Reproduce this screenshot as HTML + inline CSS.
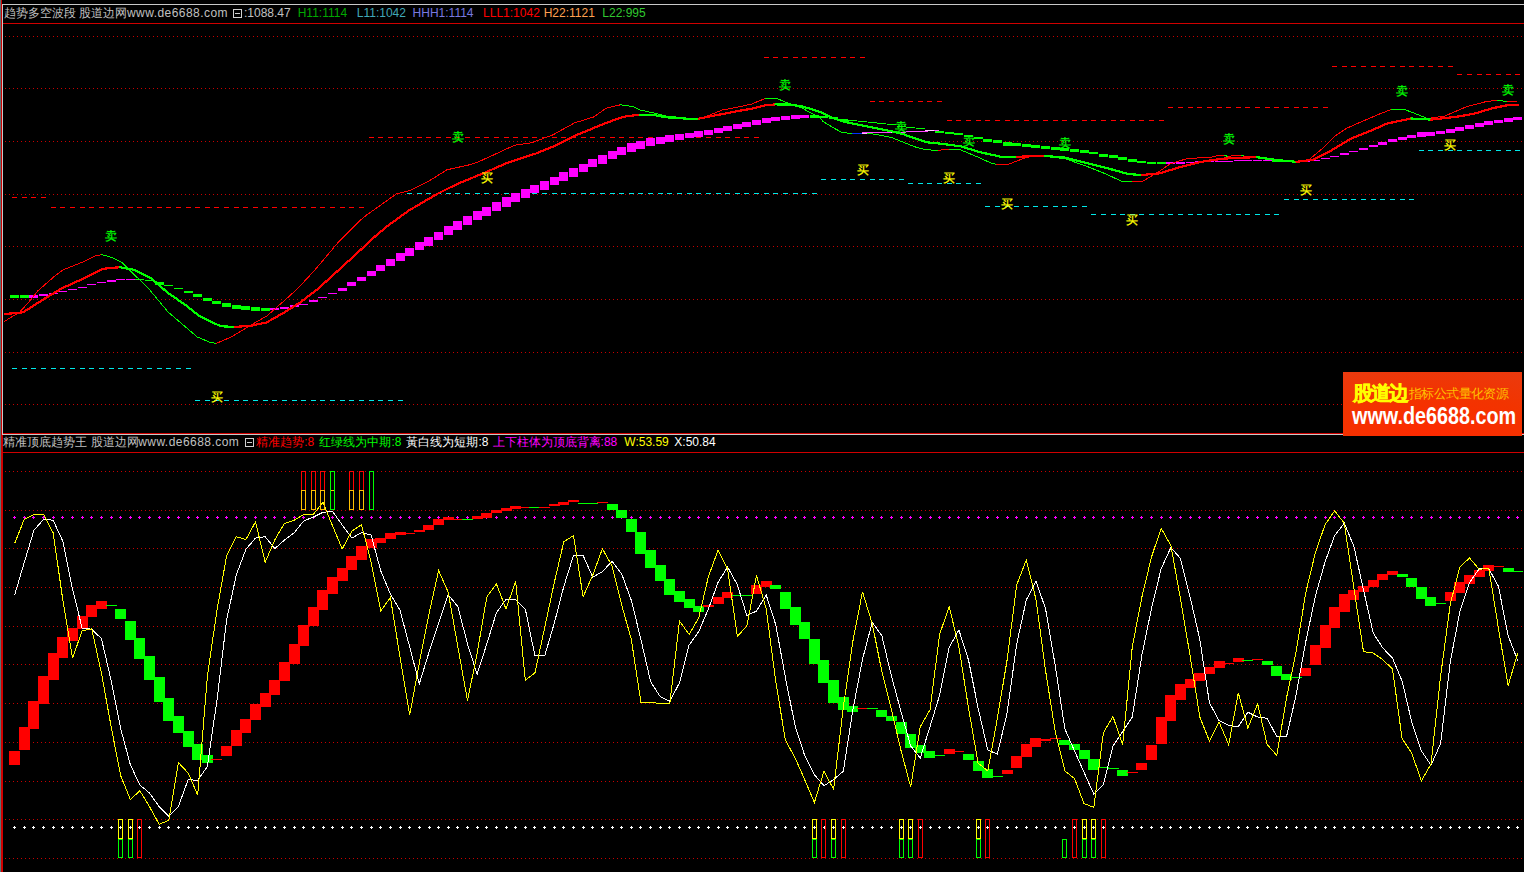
<!DOCTYPE html>
<html><head><meta charset="utf-8">
<style>
html,body{margin:0;padding:0;background:#000;width:1524px;height:872px;overflow:hidden}
#c{position:absolute;left:0;top:0}
.t{position:absolute;font-family:"Liberation Sans",sans-serif;font-size:12px;line-height:14px;white-space:nowrap}
.h{position:absolute;font-family:"Liberation Sans",sans-serif;font-size:12px;line-height:14px;white-space:nowrap}
.bx{position:absolute;width:7px;height:7px;border:1px solid #D0D0D0}
.bx::after{content:'';position:absolute;left:1px;top:3px;width:5px;height:1px;background:#D0D0D0}
.lb{position:absolute;font-family:"Liberation Sans",sans-serif;font-size:12px;line-height:14px;width:12px;height:14px;text-align:center;-webkit-text-stroke:0.25px currentColor}
#logo{position:absolute;left:1343px;top:372px;width:179px;height:64px;overflow:hidden;background:radial-gradient(ellipse 120% 140% at 50% 110%,#FF2800 0%,#F23400 55%,#E83C14 100%)}
#logo .a{position:absolute;left:10px;top:10px;font-family:"Liberation Sans",sans-serif;font-weight:bold;font-size:20px;line-height:22px;color:#FFFF00;letter-spacing:-2px;-webkit-text-stroke:0.4px #FFFF00}
#logo .b{position:absolute;left:66px;top:13.5px;font-family:"Liberation Sans",sans-serif;font-size:13.2px;line-height:16px;color:#FFC000;letter-spacing:-0.6px}
#logo .c{position:absolute;left:9px;top:32px;font-family:"Liberation Sans",sans-serif;font-weight:bold;font-size:23px;line-height:24px;color:#FFFFFF;transform-origin:0 0;transform:scaleX(0.86)}
</style></head><body>
<svg id="c" shape-rendering="crispEdges" width="1524" height="872" viewBox="0 0 1524 872">
<rect x="0" y="0" width="1" height="872" fill="#5F7373"/>
<rect x="1" y="0" width="1" height="872" fill="#D00000"/>
<rect x="2" y="4" width="1" height="430" fill="#C8C8C8"/>
<rect x="2" y="434" width="1" height="438" fill="#D00000"/>
<rect x="2" y="4" width="1522" height="1" fill="#C8C8C8"/>
<rect x="3" y="23" width="1521" height="1" fill="#D00000"/>
<rect x="3" y="433" width="1521" height="1" fill="#D00000"/>
<rect x="2" y="434" width="1522" height="1" fill="#C8C8C8"/>
<rect x="3" y="452" width="1521" height="1" fill="#D00000"/>
<line x1="5" y1="36.5" x2="1522" y2="36.5" stroke="#C80000" stroke-width="1" stroke-dasharray="1 3"/>
<line x1="5" y1="88.5" x2="1522" y2="88.5" stroke="#C80000" stroke-width="1" stroke-dasharray="1 3"/>
<line x1="5" y1="141.5" x2="1522" y2="141.5" stroke="#C80000" stroke-width="1" stroke-dasharray="1 3"/>
<line x1="5" y1="194.5" x2="1522" y2="194.5" stroke="#C80000" stroke-width="1" stroke-dasharray="1 3"/>
<line x1="5" y1="246.5" x2="1522" y2="246.5" stroke="#C80000" stroke-width="1" stroke-dasharray="1 3"/>
<line x1="5" y1="299.5" x2="1522" y2="299.5" stroke="#C80000" stroke-width="1" stroke-dasharray="1 3"/>
<line x1="5" y1="352.5" x2="1522" y2="352.5" stroke="#C80000" stroke-width="1" stroke-dasharray="1 3"/>
<line x1="5" y1="404.5" x2="1522" y2="404.5" stroke="#C80000" stroke-width="1" stroke-dasharray="1 3"/>
<line x1="5" y1="471.5" x2="1522" y2="471.5" stroke="#C80000" stroke-width="1" stroke-dasharray="1 3"/>
<line x1="5" y1="510.5" x2="1522" y2="510.5" stroke="#C80000" stroke-width="1" stroke-dasharray="1 3"/>
<line x1="5" y1="548.5" x2="1522" y2="548.5" stroke="#C80000" stroke-width="1" stroke-dasharray="1 3"/>
<line x1="5" y1="587.5" x2="1522" y2="587.5" stroke="#C80000" stroke-width="1" stroke-dasharray="1 3"/>
<line x1="5" y1="626.5" x2="1522" y2="626.5" stroke="#C80000" stroke-width="1" stroke-dasharray="1 3"/>
<line x1="5" y1="664.5" x2="1522" y2="664.5" stroke="#C80000" stroke-width="1" stroke-dasharray="1 3"/>
<line x1="5" y1="703.5" x2="1522" y2="703.5" stroke="#C80000" stroke-width="1" stroke-dasharray="1 3"/>
<line x1="5" y1="742.5" x2="1522" y2="742.5" stroke="#C80000" stroke-width="1" stroke-dasharray="1 3"/>
<line x1="5" y1="781.5" x2="1522" y2="781.5" stroke="#C80000" stroke-width="1" stroke-dasharray="1 3"/>
<line x1="5" y1="819.5" x2="1522" y2="819.5" stroke="#C80000" stroke-width="1" stroke-dasharray="1 3"/>
<line x1="5" y1="858.5" x2="1522" y2="858.5" stroke="#C80000" stroke-width="1" stroke-dasharray="1 3"/>
<rect x="12" y="197" width="5" height="1" fill="#FF0000"/>
<rect x="22" y="197" width="5" height="1" fill="#FF0000"/>
<rect x="31" y="197" width="5" height="1" fill="#FF0000"/>
<rect x="41" y="197" width="5" height="1" fill="#FF0000"/>
<rect x="51" y="207" width="5" height="1" fill="#FF0000"/>
<rect x="60" y="207" width="5" height="1" fill="#FF0000"/>
<rect x="70" y="207" width="5" height="1" fill="#FF0000"/>
<rect x="80" y="207" width="5" height="1" fill="#FF0000"/>
<rect x="89" y="207" width="5" height="1" fill="#FF0000"/>
<rect x="99" y="207" width="5" height="1" fill="#FF0000"/>
<rect x="109" y="207" width="5" height="1" fill="#FF0000"/>
<rect x="118" y="207" width="5" height="1" fill="#FF0000"/>
<rect x="128" y="207" width="5" height="1" fill="#FF0000"/>
<rect x="137" y="207" width="5" height="1" fill="#FF0000"/>
<rect x="147" y="207" width="5" height="1" fill="#FF0000"/>
<rect x="157" y="207" width="5" height="1" fill="#FF0000"/>
<rect x="166" y="207" width="5" height="1" fill="#FF0000"/>
<rect x="176" y="207" width="5" height="1" fill="#FF0000"/>
<rect x="186" y="207" width="5" height="1" fill="#FF0000"/>
<rect x="195" y="207" width="5" height="1" fill="#FF0000"/>
<rect x="205" y="207" width="5" height="1" fill="#FF0000"/>
<rect x="214" y="207" width="5" height="1" fill="#FF0000"/>
<rect x="224" y="207" width="5" height="1" fill="#FF0000"/>
<rect x="234" y="207" width="5" height="1" fill="#FF0000"/>
<rect x="243" y="207" width="5" height="1" fill="#FF0000"/>
<rect x="253" y="207" width="5" height="1" fill="#FF0000"/>
<rect x="263" y="207" width="5" height="1" fill="#FF0000"/>
<rect x="272" y="207" width="5" height="1" fill="#FF0000"/>
<rect x="282" y="207" width="5" height="1" fill="#FF0000"/>
<rect x="292" y="207" width="5" height="1" fill="#FF0000"/>
<rect x="301" y="207" width="5" height="1" fill="#FF0000"/>
<rect x="311" y="207" width="5" height="1" fill="#FF0000"/>
<rect x="320" y="207" width="5" height="1" fill="#FF0000"/>
<rect x="330" y="207" width="5" height="1" fill="#FF0000"/>
<rect x="340" y="207" width="5" height="1" fill="#FF0000"/>
<rect x="349" y="207" width="5" height="1" fill="#FF0000"/>
<rect x="359" y="207" width="5" height="1" fill="#FF0000"/>
<rect x="369" y="137" width="5" height="1" fill="#FF0000"/>
<rect x="378" y="137" width="5" height="1" fill="#FF0000"/>
<rect x="388" y="137" width="5" height="1" fill="#FF0000"/>
<rect x="398" y="137" width="5" height="1" fill="#FF0000"/>
<rect x="407" y="137" width="5" height="1" fill="#FF0000"/>
<rect x="417" y="137" width="5" height="1" fill="#FF0000"/>
<rect x="426" y="137" width="5" height="1" fill="#FF0000"/>
<rect x="436" y="137" width="5" height="1" fill="#FF0000"/>
<rect x="446" y="137" width="5" height="1" fill="#FF0000"/>
<rect x="455" y="137" width="5" height="1" fill="#FF0000"/>
<rect x="465" y="137" width="5" height="1" fill="#FF0000"/>
<rect x="475" y="137" width="5" height="1" fill="#FF0000"/>
<rect x="484" y="137" width="5" height="1" fill="#FF0000"/>
<rect x="494" y="137" width="5" height="1" fill="#FF0000"/>
<rect x="504" y="137" width="5" height="1" fill="#FF0000"/>
<rect x="513" y="137" width="5" height="1" fill="#FF0000"/>
<rect x="523" y="137" width="5" height="1" fill="#FF0000"/>
<rect x="532" y="137" width="5" height="1" fill="#FF0000"/>
<rect x="542" y="137" width="5" height="1" fill="#FF0000"/>
<rect x="552" y="137" width="5" height="1" fill="#FF0000"/>
<rect x="561" y="137" width="5" height="1" fill="#FF0000"/>
<rect x="571" y="137" width="5" height="1" fill="#FF0000"/>
<rect x="581" y="137" width="5" height="1" fill="#FF0000"/>
<rect x="590" y="137" width="5" height="1" fill="#FF0000"/>
<rect x="600" y="137" width="5" height="1" fill="#FF0000"/>
<rect x="610" y="137" width="5" height="1" fill="#FF0000"/>
<rect x="619" y="137" width="5" height="1" fill="#FF0000"/>
<rect x="629" y="137" width="5" height="1" fill="#FF0000"/>
<rect x="638" y="137" width="5" height="1" fill="#FF0000"/>
<rect x="648" y="137" width="5" height="1" fill="#FF0000"/>
<rect x="658" y="137" width="5" height="1" fill="#FF0000"/>
<rect x="667" y="137" width="5" height="1" fill="#FF0000"/>
<rect x="677" y="137" width="5" height="1" fill="#FF0000"/>
<rect x="687" y="137" width="5" height="1" fill="#FF0000"/>
<rect x="696" y="137" width="5" height="1" fill="#FF0000"/>
<rect x="706" y="137" width="5" height="1" fill="#FF0000"/>
<rect x="716" y="137" width="5" height="1" fill="#FF0000"/>
<rect x="725" y="137" width="5" height="1" fill="#FF0000"/>
<rect x="735" y="137" width="5" height="1" fill="#FF0000"/>
<rect x="744" y="137" width="5" height="1" fill="#FF0000"/>
<rect x="754" y="137" width="5" height="1" fill="#FF0000"/>
<rect x="764" y="57" width="5" height="1" fill="#FF0000"/>
<rect x="773" y="57" width="5" height="1" fill="#FF0000"/>
<rect x="783" y="57" width="5" height="1" fill="#FF0000"/>
<rect x="793" y="57" width="5" height="1" fill="#FF0000"/>
<rect x="802" y="57" width="5" height="1" fill="#FF0000"/>
<rect x="812" y="57" width="5" height="1" fill="#FF0000"/>
<rect x="821" y="57" width="5" height="1" fill="#FF0000"/>
<rect x="831" y="57" width="5" height="1" fill="#FF0000"/>
<rect x="841" y="57" width="5" height="1" fill="#FF0000"/>
<rect x="850" y="57" width="5" height="1" fill="#FF0000"/>
<rect x="860" y="57" width="5" height="1" fill="#FF0000"/>
<rect x="870" y="101" width="5" height="1" fill="#FF0000"/>
<rect x="879" y="101" width="5" height="1" fill="#FF0000"/>
<rect x="889" y="101" width="5" height="1" fill="#FF0000"/>
<rect x="899" y="101" width="5" height="1" fill="#FF0000"/>
<rect x="908" y="101" width="5" height="1" fill="#FF0000"/>
<rect x="918" y="101" width="5" height="1" fill="#FF0000"/>
<rect x="927" y="101" width="5" height="1" fill="#FF0000"/>
<rect x="937" y="101" width="5" height="1" fill="#FF0000"/>
<rect x="947" y="120" width="5" height="1" fill="#FF0000"/>
<rect x="956" y="120" width="5" height="1" fill="#FF0000"/>
<rect x="966" y="120" width="5" height="1" fill="#FF0000"/>
<rect x="976" y="120" width="5" height="1" fill="#FF0000"/>
<rect x="985" y="120" width="5" height="1" fill="#FF0000"/>
<rect x="995" y="120" width="5" height="1" fill="#FF0000"/>
<rect x="1005" y="120" width="5" height="1" fill="#FF0000"/>
<rect x="1014" y="120" width="5" height="1" fill="#FF0000"/>
<rect x="1024" y="120" width="5" height="1" fill="#FF0000"/>
<rect x="1033" y="120" width="5" height="1" fill="#FF0000"/>
<rect x="1043" y="120" width="5" height="1" fill="#FF0000"/>
<rect x="1053" y="120" width="5" height="1" fill="#FF0000"/>
<rect x="1062" y="120" width="5" height="1" fill="#FF0000"/>
<rect x="1072" y="120" width="5" height="1" fill="#FF0000"/>
<rect x="1082" y="120" width="5" height="1" fill="#FF0000"/>
<rect x="1091" y="120" width="5" height="1" fill="#FF0000"/>
<rect x="1101" y="120" width="5" height="1" fill="#FF0000"/>
<rect x="1111" y="120" width="5" height="1" fill="#FF0000"/>
<rect x="1120" y="120" width="5" height="1" fill="#FF0000"/>
<rect x="1130" y="120" width="5" height="1" fill="#FF0000"/>
<rect x="1139" y="120" width="5" height="1" fill="#FF0000"/>
<rect x="1149" y="120" width="5" height="1" fill="#FF0000"/>
<rect x="1159" y="120" width="5" height="1" fill="#FF0000"/>
<rect x="1168" y="107" width="5" height="1" fill="#FF0000"/>
<rect x="1178" y="107" width="5" height="1" fill="#FF0000"/>
<rect x="1188" y="107" width="5" height="1" fill="#FF0000"/>
<rect x="1197" y="107" width="5" height="1" fill="#FF0000"/>
<rect x="1207" y="107" width="5" height="1" fill="#FF0000"/>
<rect x="1217" y="107" width="5" height="1" fill="#FF0000"/>
<rect x="1226" y="107" width="5" height="1" fill="#FF0000"/>
<rect x="1236" y="107" width="5" height="1" fill="#FF0000"/>
<rect x="1245" y="107" width="5" height="1" fill="#FF0000"/>
<rect x="1255" y="107" width="5" height="1" fill="#FF0000"/>
<rect x="1265" y="107" width="5" height="1" fill="#FF0000"/>
<rect x="1274" y="107" width="5" height="1" fill="#FF0000"/>
<rect x="1284" y="107" width="5" height="1" fill="#FF0000"/>
<rect x="1294" y="107" width="5" height="1" fill="#FF0000"/>
<rect x="1303" y="107" width="5" height="1" fill="#FF0000"/>
<rect x="1313" y="107" width="5" height="1" fill="#FF0000"/>
<rect x="1323" y="107" width="5" height="1" fill="#FF0000"/>
<rect x="1332" y="66" width="5" height="1" fill="#FF0000"/>
<rect x="1342" y="66" width="5" height="1" fill="#FF0000"/>
<rect x="1351" y="66" width="5" height="1" fill="#FF0000"/>
<rect x="1361" y="66" width="5" height="1" fill="#FF0000"/>
<rect x="1371" y="66" width="5" height="1" fill="#FF0000"/>
<rect x="1380" y="66" width="5" height="1" fill="#FF0000"/>
<rect x="1390" y="66" width="5" height="1" fill="#FF0000"/>
<rect x="1400" y="66" width="5" height="1" fill="#FF0000"/>
<rect x="1409" y="66" width="5" height="1" fill="#FF0000"/>
<rect x="1419" y="66" width="5" height="1" fill="#FF0000"/>
<rect x="1428" y="66" width="5" height="1" fill="#FF0000"/>
<rect x="1438" y="66" width="5" height="1" fill="#FF0000"/>
<rect x="1448" y="66" width="5" height="1" fill="#FF0000"/>
<rect x="1457" y="74" width="5" height="1" fill="#FF0000"/>
<rect x="1467" y="74" width="5" height="1" fill="#FF0000"/>
<rect x="1477" y="74" width="5" height="1" fill="#FF0000"/>
<rect x="1486" y="74" width="5" height="1" fill="#FF0000"/>
<rect x="1496" y="74" width="5" height="1" fill="#FF0000"/>
<rect x="1506" y="74" width="5" height="1" fill="#FF0000"/>
<rect x="1515" y="74" width="5" height="1" fill="#FF0000"/>
<rect x="12" y="368" width="5" height="1" fill="#00E8E8"/>
<rect x="22" y="368" width="5" height="1" fill="#00E8E8"/>
<rect x="31" y="368" width="5" height="1" fill="#00E8E8"/>
<rect x="41" y="368" width="5" height="1" fill="#00E8E8"/>
<rect x="51" y="368" width="5" height="1" fill="#00E8E8"/>
<rect x="60" y="368" width="5" height="1" fill="#00E8E8"/>
<rect x="70" y="368" width="5" height="1" fill="#00E8E8"/>
<rect x="80" y="368" width="5" height="1" fill="#00E8E8"/>
<rect x="89" y="368" width="5" height="1" fill="#00E8E8"/>
<rect x="99" y="368" width="5" height="1" fill="#00E8E8"/>
<rect x="109" y="368" width="5" height="1" fill="#00E8E8"/>
<rect x="118" y="368" width="5" height="1" fill="#00E8E8"/>
<rect x="128" y="368" width="5" height="1" fill="#00E8E8"/>
<rect x="137" y="368" width="5" height="1" fill="#00E8E8"/>
<rect x="147" y="368" width="5" height="1" fill="#00E8E8"/>
<rect x="157" y="368" width="5" height="1" fill="#00E8E8"/>
<rect x="166" y="368" width="5" height="1" fill="#00E8E8"/>
<rect x="176" y="368" width="5" height="1" fill="#00E8E8"/>
<rect x="186" y="368" width="5" height="1" fill="#00E8E8"/>
<rect x="195" y="400" width="5" height="1" fill="#00E8E8"/>
<rect x="205" y="400" width="5" height="1" fill="#00E8E8"/>
<rect x="214" y="400" width="5" height="1" fill="#00E8E8"/>
<rect x="224" y="400" width="5" height="1" fill="#00E8E8"/>
<rect x="234" y="400" width="5" height="1" fill="#00E8E8"/>
<rect x="243" y="400" width="5" height="1" fill="#00E8E8"/>
<rect x="253" y="400" width="5" height="1" fill="#00E8E8"/>
<rect x="263" y="400" width="5" height="1" fill="#00E8E8"/>
<rect x="272" y="400" width="5" height="1" fill="#00E8E8"/>
<rect x="282" y="400" width="5" height="1" fill="#00E8E8"/>
<rect x="292" y="400" width="5" height="1" fill="#00E8E8"/>
<rect x="301" y="400" width="5" height="1" fill="#00E8E8"/>
<rect x="311" y="400" width="5" height="1" fill="#00E8E8"/>
<rect x="320" y="400" width="5" height="1" fill="#00E8E8"/>
<rect x="330" y="400" width="5" height="1" fill="#00E8E8"/>
<rect x="340" y="400" width="5" height="1" fill="#00E8E8"/>
<rect x="349" y="400" width="5" height="1" fill="#00E8E8"/>
<rect x="359" y="400" width="5" height="1" fill="#00E8E8"/>
<rect x="369" y="400" width="5" height="1" fill="#00E8E8"/>
<rect x="378" y="400" width="5" height="1" fill="#00E8E8"/>
<rect x="388" y="400" width="5" height="1" fill="#00E8E8"/>
<rect x="398" y="400" width="5" height="1" fill="#00E8E8"/>
<rect x="407" y="193" width="5" height="1" fill="#00E8E8"/>
<rect x="417" y="193" width="5" height="1" fill="#00E8E8"/>
<rect x="426" y="193" width="5" height="1" fill="#00E8E8"/>
<rect x="436" y="193" width="5" height="1" fill="#00E8E8"/>
<rect x="446" y="193" width="5" height="1" fill="#00E8E8"/>
<rect x="455" y="193" width="5" height="1" fill="#00E8E8"/>
<rect x="465" y="193" width="5" height="1" fill="#00E8E8"/>
<rect x="475" y="193" width="5" height="1" fill="#00E8E8"/>
<rect x="484" y="193" width="5" height="1" fill="#00E8E8"/>
<rect x="494" y="193" width="5" height="1" fill="#00E8E8"/>
<rect x="504" y="193" width="5" height="1" fill="#00E8E8"/>
<rect x="513" y="193" width="5" height="1" fill="#00E8E8"/>
<rect x="523" y="193" width="5" height="1" fill="#00E8E8"/>
<rect x="532" y="193" width="5" height="1" fill="#00E8E8"/>
<rect x="542" y="193" width="5" height="1" fill="#00E8E8"/>
<rect x="552" y="193" width="5" height="1" fill="#00E8E8"/>
<rect x="561" y="193" width="5" height="1" fill="#00E8E8"/>
<rect x="571" y="193" width="5" height="1" fill="#00E8E8"/>
<rect x="581" y="193" width="5" height="1" fill="#00E8E8"/>
<rect x="590" y="193" width="5" height="1" fill="#00E8E8"/>
<rect x="600" y="193" width="5" height="1" fill="#00E8E8"/>
<rect x="610" y="193" width="5" height="1" fill="#00E8E8"/>
<rect x="619" y="193" width="5" height="1" fill="#00E8E8"/>
<rect x="629" y="193" width="5" height="1" fill="#00E8E8"/>
<rect x="638" y="193" width="5" height="1" fill="#00E8E8"/>
<rect x="648" y="193" width="5" height="1" fill="#00E8E8"/>
<rect x="658" y="193" width="5" height="1" fill="#00E8E8"/>
<rect x="667" y="193" width="5" height="1" fill="#00E8E8"/>
<rect x="677" y="193" width="5" height="1" fill="#00E8E8"/>
<rect x="687" y="193" width="5" height="1" fill="#00E8E8"/>
<rect x="696" y="193" width="5" height="1" fill="#00E8E8"/>
<rect x="706" y="193" width="5" height="1" fill="#00E8E8"/>
<rect x="716" y="193" width="5" height="1" fill="#00E8E8"/>
<rect x="725" y="193" width="5" height="1" fill="#00E8E8"/>
<rect x="735" y="193" width="5" height="1" fill="#00E8E8"/>
<rect x="744" y="193" width="5" height="1" fill="#00E8E8"/>
<rect x="754" y="193" width="5" height="1" fill="#00E8E8"/>
<rect x="764" y="193" width="5" height="1" fill="#00E8E8"/>
<rect x="773" y="193" width="5" height="1" fill="#00E8E8"/>
<rect x="783" y="193" width="5" height="1" fill="#00E8E8"/>
<rect x="793" y="193" width="5" height="1" fill="#00E8E8"/>
<rect x="802" y="193" width="5" height="1" fill="#00E8E8"/>
<rect x="812" y="193" width="5" height="1" fill="#00E8E8"/>
<rect x="821" y="179" width="5" height="1" fill="#00E8E8"/>
<rect x="831" y="179" width="5" height="1" fill="#00E8E8"/>
<rect x="841" y="179" width="5" height="1" fill="#00E8E8"/>
<rect x="850" y="179" width="5" height="1" fill="#00E8E8"/>
<rect x="860" y="179" width="5" height="1" fill="#00E8E8"/>
<rect x="870" y="179" width="5" height="1" fill="#00E8E8"/>
<rect x="879" y="179" width="5" height="1" fill="#00E8E8"/>
<rect x="889" y="179" width="5" height="1" fill="#00E8E8"/>
<rect x="899" y="179" width="5" height="1" fill="#00E8E8"/>
<rect x="908" y="183" width="5" height="1" fill="#00E8E8"/>
<rect x="918" y="183" width="5" height="1" fill="#00E8E8"/>
<rect x="927" y="183" width="5" height="1" fill="#00E8E8"/>
<rect x="937" y="183" width="5" height="1" fill="#00E8E8"/>
<rect x="947" y="183" width="5" height="1" fill="#00E8E8"/>
<rect x="956" y="183" width="5" height="1" fill="#00E8E8"/>
<rect x="966" y="183" width="5" height="1" fill="#00E8E8"/>
<rect x="976" y="183" width="5" height="1" fill="#00E8E8"/>
<rect x="985" y="206" width="5" height="1" fill="#00E8E8"/>
<rect x="995" y="206" width="5" height="1" fill="#00E8E8"/>
<rect x="1005" y="206" width="5" height="1" fill="#00E8E8"/>
<rect x="1014" y="206" width="5" height="1" fill="#00E8E8"/>
<rect x="1024" y="206" width="5" height="1" fill="#00E8E8"/>
<rect x="1033" y="206" width="5" height="1" fill="#00E8E8"/>
<rect x="1043" y="206" width="5" height="1" fill="#00E8E8"/>
<rect x="1053" y="206" width="5" height="1" fill="#00E8E8"/>
<rect x="1062" y="206" width="5" height="1" fill="#00E8E8"/>
<rect x="1072" y="206" width="5" height="1" fill="#00E8E8"/>
<rect x="1082" y="206" width="5" height="1" fill="#00E8E8"/>
<rect x="1091" y="214" width="5" height="1" fill="#00E8E8"/>
<rect x="1101" y="214" width="5" height="1" fill="#00E8E8"/>
<rect x="1111" y="214" width="5" height="1" fill="#00E8E8"/>
<rect x="1120" y="214" width="5" height="1" fill="#00E8E8"/>
<rect x="1130" y="214" width="5" height="1" fill="#00E8E8"/>
<rect x="1139" y="214" width="5" height="1" fill="#00E8E8"/>
<rect x="1149" y="214" width="5" height="1" fill="#00E8E8"/>
<rect x="1159" y="214" width="5" height="1" fill="#00E8E8"/>
<rect x="1168" y="214" width="5" height="1" fill="#00E8E8"/>
<rect x="1178" y="214" width="5" height="1" fill="#00E8E8"/>
<rect x="1188" y="214" width="5" height="1" fill="#00E8E8"/>
<rect x="1197" y="214" width="5" height="1" fill="#00E8E8"/>
<rect x="1207" y="214" width="5" height="1" fill="#00E8E8"/>
<rect x="1217" y="214" width="5" height="1" fill="#00E8E8"/>
<rect x="1226" y="214" width="5" height="1" fill="#00E8E8"/>
<rect x="1236" y="214" width="5" height="1" fill="#00E8E8"/>
<rect x="1245" y="214" width="5" height="1" fill="#00E8E8"/>
<rect x="1255" y="214" width="5" height="1" fill="#00E8E8"/>
<rect x="1265" y="214" width="5" height="1" fill="#00E8E8"/>
<rect x="1274" y="214" width="5" height="1" fill="#00E8E8"/>
<rect x="1284" y="199" width="5" height="1" fill="#00E8E8"/>
<rect x="1294" y="199" width="5" height="1" fill="#00E8E8"/>
<rect x="1303" y="199" width="5" height="1" fill="#00E8E8"/>
<rect x="1313" y="199" width="5" height="1" fill="#00E8E8"/>
<rect x="1323" y="199" width="5" height="1" fill="#00E8E8"/>
<rect x="1332" y="199" width="5" height="1" fill="#00E8E8"/>
<rect x="1342" y="199" width="5" height="1" fill="#00E8E8"/>
<rect x="1351" y="199" width="5" height="1" fill="#00E8E8"/>
<rect x="1361" y="199" width="5" height="1" fill="#00E8E8"/>
<rect x="1371" y="199" width="5" height="1" fill="#00E8E8"/>
<rect x="1380" y="199" width="5" height="1" fill="#00E8E8"/>
<rect x="1390" y="199" width="5" height="1" fill="#00E8E8"/>
<rect x="1400" y="199" width="5" height="1" fill="#00E8E8"/>
<rect x="1409" y="199" width="5" height="1" fill="#00E8E8"/>
<rect x="1419" y="150" width="5" height="1" fill="#00E8E8"/>
<rect x="1428" y="150" width="5" height="1" fill="#00E8E8"/>
<rect x="1438" y="150" width="5" height="1" fill="#00E8E8"/>
<rect x="1448" y="150" width="5" height="1" fill="#00E8E8"/>
<rect x="1457" y="150" width="5" height="1" fill="#00E8E8"/>
<rect x="1467" y="150" width="5" height="1" fill="#00E8E8"/>
<rect x="1477" y="150" width="5" height="1" fill="#00E8E8"/>
<rect x="1486" y="150" width="5" height="1" fill="#00E8E8"/>
<rect x="1496" y="150" width="5" height="1" fill="#00E8E8"/>
<rect x="1506" y="150" width="5" height="1" fill="#00E8E8"/>
<rect x="1515" y="150" width="5" height="1" fill="#00E8E8"/>
<rect x="10" y="295" width="9" height="3" fill="#00FF00"/>
<rect x="20" y="295" width="9" height="3" fill="#00FF00"/>
<rect x="29" y="295" width="9" height="3" fill="#FF00FF"/>
<rect x="39" y="294" width="9" height="2" fill="#FF00FF"/>
<rect x="49" y="293" width="9" height="1" fill="#FF00FF"/>
<rect x="58" y="291" width="9" height="1" fill="#FF00FF"/>
<rect x="68" y="289" width="9" height="1" fill="#FF00FF"/>
<rect x="78" y="287" width="9" height="1" fill="#FF00FF"/>
<rect x="87" y="284" width="9" height="1" fill="#FF00FF"/>
<rect x="97" y="282" width="9" height="1" fill="#FF00FF"/>
<rect x="107" y="280" width="9" height="2" fill="#FF00FF"/>
<rect x="116" y="279" width="9" height="1" fill="#FF00FF"/>
<rect x="126" y="279" width="9" height="1" fill="#FF00FF"/>
<rect x="135" y="279" width="9" height="1" fill="#00FF00"/>
<rect x="145" y="280" width="9" height="1" fill="#00FF00"/>
<rect x="155" y="282" width="9" height="3" fill="#00FF00"/>
<rect x="164" y="285" width="9" height="1" fill="#00FF00"/>
<rect x="174" y="288" width="9" height="1" fill="#00FF00"/>
<rect x="184" y="291" width="9" height="2" fill="#00FF00"/>
<rect x="193" y="294" width="9" height="3" fill="#00FF00"/>
<rect x="203" y="298" width="9" height="3" fill="#00FF00"/>
<rect x="212" y="301" width="9" height="3" fill="#00FF00"/>
<rect x="222" y="303" width="9" height="4" fill="#00FF00"/>
<rect x="232" y="305" width="9" height="4" fill="#00FF00"/>
<rect x="241" y="306" width="9" height="4" fill="#00FF00"/>
<rect x="251" y="307" width="9" height="4" fill="#00FF00"/>
<rect x="261" y="308" width="9" height="3" fill="#00FF00"/>
<rect x="270" y="308" width="9" height="2" fill="#FF00FF"/>
<rect x="280" y="307" width="9" height="2" fill="#FF00FF"/>
<rect x="290" y="305" width="9" height="2" fill="#FF00FF"/>
<rect x="299" y="304" width="9" height="1" fill="#FF00FF"/>
<rect x="309" y="300" width="9" height="2" fill="#FF00FF"/>
<rect x="318" y="297" width="9" height="1" fill="#FF00FF"/>
<rect x="328" y="293" width="9" height="1" fill="#FF00FF"/>
<rect x="338" y="288" width="9" height="3" fill="#FF00FF"/>
<rect x="347" y="282" width="9" height="4" fill="#FF00FF"/>
<rect x="357" y="277" width="9" height="4" fill="#FF00FF"/>
<rect x="367" y="271" width="9" height="5" fill="#FF00FF"/>
<rect x="376" y="265" width="9" height="6" fill="#FF00FF"/>
<rect x="386" y="259" width="9" height="7" fill="#FF00FF"/>
<rect x="396" y="253" width="9" height="8" fill="#FF00FF"/>
<rect x="405" y="248" width="9" height="8" fill="#FF00FF"/>
<rect x="415" y="242" width="9" height="8" fill="#FF00FF"/>
<rect x="424" y="237" width="9" height="9" fill="#FF00FF"/>
<rect x="434" y="232" width="9" height="8" fill="#FF00FF"/>
<rect x="444" y="226" width="9" height="9" fill="#FF00FF"/>
<rect x="453" y="221" width="9" height="9" fill="#FF00FF"/>
<rect x="463" y="216" width="9" height="9" fill="#FF00FF"/>
<rect x="473" y="211" width="9" height="9" fill="#FF00FF"/>
<rect x="482" y="207" width="9" height="9" fill="#FF00FF"/>
<rect x="492" y="202" width="9" height="9" fill="#FF00FF"/>
<rect x="502" y="197" width="9" height="10" fill="#FF00FF"/>
<rect x="511" y="193" width="9" height="9" fill="#FF00FF"/>
<rect x="521" y="189" width="9" height="9" fill="#FF00FF"/>
<rect x="530" y="185" width="9" height="8" fill="#FF00FF"/>
<rect x="540" y="181" width="9" height="9" fill="#FF00FF"/>
<rect x="550" y="177" width="9" height="8" fill="#FF00FF"/>
<rect x="559" y="172" width="9" height="9" fill="#FF00FF"/>
<rect x="569" y="168" width="9" height="9" fill="#FF00FF"/>
<rect x="579" y="164" width="9" height="8" fill="#FF00FF"/>
<rect x="588" y="159" width="9" height="8" fill="#FF00FF"/>
<rect x="598" y="155" width="9" height="9" fill="#FF00FF"/>
<rect x="608" y="151" width="9" height="8" fill="#FF00FF"/>
<rect x="617" y="147" width="9" height="8" fill="#FF00FF"/>
<rect x="627" y="143" width="9" height="9" fill="#FF00FF"/>
<rect x="636" y="141" width="9" height="8" fill="#FF00FF"/>
<rect x="646" y="138" width="9" height="8" fill="#FF00FF"/>
<rect x="656" y="137" width="9" height="7" fill="#FF00FF"/>
<rect x="665" y="135" width="9" height="7" fill="#FF00FF"/>
<rect x="675" y="134" width="9" height="6" fill="#FF00FF"/>
<rect x="685" y="133" width="9" height="5" fill="#FF00FF"/>
<rect x="694" y="131" width="9" height="6" fill="#FF00FF"/>
<rect x="704" y="130" width="9" height="5" fill="#FF00FF"/>
<rect x="714" y="128" width="9" height="5" fill="#FF00FF"/>
<rect x="723" y="126" width="9" height="5" fill="#FF00FF"/>
<rect x="733" y="124" width="9" height="5" fill="#FF00FF"/>
<rect x="742" y="122" width="9" height="5" fill="#FF00FF"/>
<rect x="752" y="120" width="9" height="5" fill="#FF00FF"/>
<rect x="762" y="118" width="9" height="5" fill="#FF00FF"/>
<rect x="771" y="117" width="9" height="4" fill="#FF00FF"/>
<rect x="781" y="116" width="9" height="4" fill="#FF00FF"/>
<rect x="791" y="115" width="9" height="4" fill="#FF00FF"/>
<rect x="800" y="115" width="9" height="3" fill="#FF00FF"/>
<rect x="810" y="115" width="9" height="3" fill="#00FF00"/>
<rect x="819" y="116" width="9" height="2" fill="#00FF00"/>
<rect x="829" y="117" width="9" height="2" fill="#00FF00"/>
<rect x="839" y="119" width="9" height="2" fill="#00FF00"/>
<rect x="848" y="120" width="9" height="1" fill="#00FF00"/>
<rect x="858" y="121" width="9" height="1" fill="#00FF00"/>
<rect x="868" y="122" width="9" height="1" fill="#00FF00"/>
<rect x="877" y="123" width="9" height="1" fill="#00FF00"/>
<rect x="887" y="124" width="9" height="1" fill="#00FF00"/>
<rect x="897" y="126" width="9" height="1" fill="#00FF00"/>
<rect x="906" y="127" width="9" height="1" fill="#00FF00"/>
<rect x="916" y="128" width="9" height="1" fill="#00FF00"/>
<rect x="925" y="130" width="9" height="1" fill="#00FF00"/>
<rect x="935" y="131" width="9" height="2" fill="#00FF00"/>
<rect x="945" y="132" width="9" height="2" fill="#00FF00"/>
<rect x="954" y="133" width="9" height="2" fill="#00FF00"/>
<rect x="964" y="135" width="9" height="2" fill="#00FF00"/>
<rect x="974" y="137" width="9" height="2" fill="#00FF00"/>
<rect x="983" y="139" width="9" height="3" fill="#00FF00"/>
<rect x="993" y="140" width="9" height="3" fill="#00FF00"/>
<rect x="1003" y="142" width="9" height="4" fill="#00FF00"/>
<rect x="1012" y="143" width="9" height="3" fill="#00FF00"/>
<rect x="1022" y="144" width="9" height="3" fill="#00FF00"/>
<rect x="1031" y="145" width="9" height="3" fill="#00FF00"/>
<rect x="1041" y="146" width="9" height="3" fill="#00FF00"/>
<rect x="1051" y="147" width="9" height="3" fill="#00FF00"/>
<rect x="1060" y="148" width="9" height="3" fill="#00FF00"/>
<rect x="1070" y="149" width="9" height="3" fill="#00FF00"/>
<rect x="1080" y="150" width="9" height="3" fill="#00FF00"/>
<rect x="1089" y="152" width="9" height="2" fill="#00FF00"/>
<rect x="1099" y="154" width="9" height="3" fill="#00FF00"/>
<rect x="1109" y="155" width="9" height="3" fill="#00FF00"/>
<rect x="1118" y="157" width="9" height="3" fill="#00FF00"/>
<rect x="1128" y="159" width="9" height="3" fill="#00FF00"/>
<rect x="1137" y="161" width="9" height="2" fill="#00FF00"/>
<rect x="1147" y="162" width="9" height="2" fill="#00FF00"/>
<rect x="1157" y="162" width="9" height="2" fill="#00FF00"/>
<rect x="1166" y="162" width="9" height="2" fill="#FF00FF"/>
<rect x="1176" y="162" width="9" height="2" fill="#FF00FF"/>
<rect x="1186" y="162" width="9" height="1" fill="#FF00FF"/>
<rect x="1195" y="161" width="9" height="2" fill="#FF00FF"/>
<rect x="1205" y="161" width="9" height="1" fill="#FF00FF"/>
<rect x="1215" y="161" width="9" height="1" fill="#FF00FF"/>
<rect x="1224" y="161" width="9" height="1" fill="#FF00FF"/>
<rect x="1234" y="160" width="9" height="1" fill="#FF00FF"/>
<rect x="1243" y="160" width="9" height="1" fill="#FF00FF"/>
<rect x="1253" y="160" width="9" height="1" fill="#FF00FF"/>
<rect x="1263" y="160" width="9" height="1" fill="#FF00FF"/>
<rect x="1272" y="160" width="9" height="2" fill="#00FF00"/>
<rect x="1282" y="161" width="9" height="1" fill="#00FF00"/>
<rect x="1292" y="161" width="9" height="1" fill="#00FF00"/>
<rect x="1301" y="160" width="9" height="2" fill="#FF00FF"/>
<rect x="1311" y="160" width="9" height="1" fill="#FF00FF"/>
<rect x="1321" y="158" width="9" height="1" fill="#FF00FF"/>
<rect x="1330" y="156" width="9" height="1" fill="#FF00FF"/>
<rect x="1340" y="153" width="9" height="2" fill="#FF00FF"/>
<rect x="1349" y="151" width="9" height="1" fill="#FF00FF"/>
<rect x="1359" y="148" width="9" height="2" fill="#FF00FF"/>
<rect x="1369" y="145" width="9" height="2" fill="#FF00FF"/>
<rect x="1378" y="142" width="9" height="3" fill="#FF00FF"/>
<rect x="1388" y="139" width="9" height="3" fill="#FF00FF"/>
<rect x="1398" y="137" width="9" height="3" fill="#FF00FF"/>
<rect x="1407" y="135" width="9" height="3" fill="#FF00FF"/>
<rect x="1417" y="132" width="9" height="5" fill="#FF00FF"/>
<rect x="1426" y="132" width="9" height="4" fill="#FF00FF"/>
<rect x="1436" y="131" width="9" height="3" fill="#FF00FF"/>
<rect x="1446" y="129" width="9" height="4" fill="#FF00FF"/>
<rect x="1455" y="127" width="9" height="4" fill="#FF00FF"/>
<rect x="1465" y="125" width="9" height="4" fill="#FF00FF"/>
<rect x="1475" y="123" width="9" height="4" fill="#FF00FF"/>
<rect x="1484" y="121" width="9" height="4" fill="#FF00FF"/>
<rect x="1494" y="120" width="9" height="3" fill="#FF00FF"/>
<rect x="1504" y="118" width="9" height="4" fill="#FF00FF"/>
<rect x="1513" y="117" width="9" height="3" fill="#FF00FF"/>
<line x1="4.6" y1="321.3" x2="19.9" y2="311.9" stroke="#FF0000" stroke-width="1" stroke-linecap="round" shape-rendering="crispEdges"/>
<line x1="19.9" y1="311.9" x2="29.4" y2="301.4" stroke="#FF0000" stroke-width="1" stroke-linecap="round" shape-rendering="crispEdges"/>
<line x1="29.4" y1="301.4" x2="37.8" y2="290.9" stroke="#FF0000" stroke-width="1" stroke-linecap="round" shape-rendering="crispEdges"/>
<line x1="37.8" y1="290.9" x2="54.6" y2="276.2" stroke="#FF0000" stroke-width="1" stroke-linecap="round" shape-rendering="crispEdges"/>
<line x1="54.6" y1="276.2" x2="63.0" y2="269.9" stroke="#FF0000" stroke-width="1" stroke-linecap="round" shape-rendering="crispEdges"/>
<line x1="63.0" y1="269.9" x2="84.0" y2="261.5" stroke="#FF0000" stroke-width="1" stroke-linecap="round" shape-rendering="crispEdges"/>
<line x1="84.0" y1="261.5" x2="94.5" y2="256.2" stroke="#FF0000" stroke-width="1" stroke-linecap="round" shape-rendering="crispEdges"/>
<line x1="94.5" y1="256.2" x2="101.8" y2="254.6" stroke="#FF0000" stroke-width="1" stroke-linecap="round" shape-rendering="crispEdges"/>
<line x1="101.8" y1="254.6" x2="111.3" y2="257.3" stroke="#00FF00" stroke-width="1" stroke-linecap="round" shape-rendering="crispEdges"/>
<line x1="111.3" y1="257.3" x2="121.8" y2="262.5" stroke="#00FF00" stroke-width="1" stroke-linecap="round" shape-rendering="crispEdges"/>
<line x1="121.8" y1="262.5" x2="130.2" y2="270.9" stroke="#00FF00" stroke-width="1" stroke-linecap="round" shape-rendering="crispEdges"/>
<line x1="130.2" y1="270.9" x2="147.0" y2="286.7" stroke="#00FF00" stroke-width="1" stroke-linecap="round" shape-rendering="crispEdges"/>
<line x1="147.0" y1="286.7" x2="157.5" y2="299.3" stroke="#00FF00" stroke-width="1" stroke-linecap="round" shape-rendering="crispEdges"/>
<line x1="157.5" y1="299.3" x2="168.0" y2="311.9" stroke="#00FF00" stroke-width="1" stroke-linecap="round" shape-rendering="crispEdges"/>
<line x1="168.0" y1="311.9" x2="182.7" y2="324.5" stroke="#00FF00" stroke-width="1" stroke-linecap="round" shape-rendering="crispEdges"/>
<line x1="182.7" y1="324.5" x2="197.4" y2="337.1" stroke="#00FF00" stroke-width="1" stroke-linecap="round" shape-rendering="crispEdges"/>
<line x1="197.4" y1="337.1" x2="210.0" y2="342.3" stroke="#00FF00" stroke-width="1" stroke-linecap="round" shape-rendering="crispEdges"/>
<line x1="210.0" y1="342.3" x2="216.3" y2="343.4" stroke="#00FF00" stroke-width="1" stroke-linecap="round" shape-rendering="crispEdges"/>
<line x1="216.3" y1="343.4" x2="231.0" y2="337.1" stroke="#FF0000" stroke-width="1" stroke-linecap="round" shape-rendering="crispEdges"/>
<line x1="231.0" y1="337.1" x2="252.0" y2="324.5" stroke="#FF0000" stroke-width="1" stroke-linecap="round" shape-rendering="crispEdges"/>
<line x1="252.0" y1="324.5" x2="266.7" y2="316.1" stroke="#FF0000" stroke-width="1" stroke-linecap="round" shape-rendering="crispEdges"/>
<line x1="266.7" y1="316.1" x2="289.2" y2="296.3" stroke="#FF0000" stroke-width="1" stroke-linecap="round" shape-rendering="crispEdges"/>
<line x1="289.2" y1="296.3" x2="298.8" y2="287.4" stroke="#FF0000" stroke-width="1" stroke-linecap="round" shape-rendering="crispEdges"/>
<line x1="298.8" y1="287.4" x2="315.3" y2="269.5" stroke="#FF0000" stroke-width="1" stroke-linecap="round" shape-rendering="crispEdges"/>
<line x1="315.3" y1="269.5" x2="326.3" y2="256.5" stroke="#FF0000" stroke-width="1" stroke-linecap="round" shape-rendering="crispEdges"/>
<line x1="326.3" y1="256.5" x2="337.3" y2="243.4" stroke="#FF0000" stroke-width="1" stroke-linecap="round" shape-rendering="crispEdges"/>
<line x1="337.3" y1="243.4" x2="360.7" y2="220.0" stroke="#FF0000" stroke-width="1" stroke-linecap="round" shape-rendering="crispEdges"/>
<line x1="360.7" y1="220.0" x2="367.4" y2="214.4" stroke="#FF0000" stroke-width="1" stroke-linecap="round" shape-rendering="crispEdges"/>
<line x1="367.4" y1="214.4" x2="379.5" y2="206.0" stroke="#FF0000" stroke-width="1" stroke-linecap="round" shape-rendering="crispEdges"/>
<line x1="379.5" y1="206.0" x2="396.3" y2="193.9" stroke="#FF0000" stroke-width="1" stroke-linecap="round" shape-rendering="crispEdges"/>
<line x1="396.3" y1="193.9" x2="410.8" y2="190.3" stroke="#FF0000" stroke-width="1" stroke-linecap="round" shape-rendering="crispEdges"/>
<line x1="410.8" y1="190.3" x2="427.6" y2="181.9" stroke="#FF0000" stroke-width="1" stroke-linecap="round" shape-rendering="crispEdges"/>
<line x1="427.6" y1="181.9" x2="446.9" y2="169.8" stroke="#FF0000" stroke-width="1" stroke-linecap="round" shape-rendering="crispEdges"/>
<line x1="446.9" y1="169.8" x2="468.6" y2="165.0" stroke="#FF0000" stroke-width="1" stroke-linecap="round" shape-rendering="crispEdges"/>
<line x1="468.6" y1="165.0" x2="478.0" y2="162.0" stroke="#FF0000" stroke-width="1" stroke-linecap="round" shape-rendering="crispEdges"/>
<line x1="478.0" y1="162.0" x2="492.6" y2="155.4" stroke="#FF0000" stroke-width="1" stroke-linecap="round" shape-rendering="crispEdges"/>
<line x1="492.6" y1="155.4" x2="514.3" y2="145.3" stroke="#FF0000" stroke-width="1" stroke-linecap="round" shape-rendering="crispEdges"/>
<line x1="514.3" y1="145.3" x2="531.2" y2="142.9" stroke="#FF0000" stroke-width="1" stroke-linecap="round" shape-rendering="crispEdges"/>
<line x1="531.2" y1="142.9" x2="552.8" y2="134.9" stroke="#FF0000" stroke-width="1" stroke-linecap="round" shape-rendering="crispEdges"/>
<line x1="552.8" y1="134.9" x2="574.5" y2="122.9" stroke="#FF0000" stroke-width="1" stroke-linecap="round" shape-rendering="crispEdges"/>
<line x1="574.5" y1="122.9" x2="593.8" y2="116.9" stroke="#FF0000" stroke-width="1" stroke-linecap="round" shape-rendering="crispEdges"/>
<line x1="593.8" y1="116.9" x2="605.8" y2="108.4" stroke="#FF0000" stroke-width="1" stroke-linecap="round" shape-rendering="crispEdges"/>
<line x1="605.8" y1="108.4" x2="620.3" y2="104.8" stroke="#FF0000" stroke-width="1" stroke-linecap="round" shape-rendering="crispEdges"/>
<line x1="620.3" y1="104.8" x2="633.0" y2="106.5" stroke="#00FF00" stroke-width="1" stroke-linecap="round" shape-rendering="crispEdges"/>
<line x1="633.0" y1="106.5" x2="639.7" y2="110.0" stroke="#00FF00" stroke-width="1" stroke-linecap="round" shape-rendering="crispEdges"/>
<line x1="639.7" y1="110.0" x2="652.8" y2="112.7" stroke="#00FF00" stroke-width="1" stroke-linecap="round" shape-rendering="crispEdges"/>
<line x1="652.8" y1="112.7" x2="666.0" y2="116.0" stroke="#00FF00" stroke-width="1" stroke-linecap="round" shape-rendering="crispEdges"/>
<line x1="666.0" y1="116.0" x2="679.0" y2="117.3" stroke="#00FF00" stroke-width="1" stroke-linecap="round" shape-rendering="crispEdges"/>
<line x1="679.0" y1="117.3" x2="688.2" y2="119.3" stroke="#00FF00" stroke-width="1" stroke-linecap="round" shape-rendering="crispEdges"/>
<line x1="688.2" y1="119.3" x2="698.7" y2="119.2" stroke="#FF0000" stroke-width="1" stroke-linecap="round" shape-rendering="crispEdges"/>
<line x1="698.7" y1="119.2" x2="709.2" y2="115.3" stroke="#FF0000" stroke-width="1" stroke-linecap="round" shape-rendering="crispEdges"/>
<line x1="709.2" y1="115.3" x2="722.4" y2="110.0" stroke="#FF0000" stroke-width="1" stroke-linecap="round" shape-rendering="crispEdges"/>
<line x1="722.4" y1="110.0" x2="735.5" y2="107.5" stroke="#FF0000" stroke-width="1" stroke-linecap="round" shape-rendering="crispEdges"/>
<line x1="735.5" y1="107.5" x2="751.2" y2="104.2" stroke="#FF0000" stroke-width="1" stroke-linecap="round" shape-rendering="crispEdges"/>
<line x1="751.2" y1="104.2" x2="765.7" y2="98.3" stroke="#FF0000" stroke-width="1" stroke-linecap="round" shape-rendering="crispEdges"/>
<line x1="765.7" y1="98.3" x2="776.8" y2="98.4" stroke="#00FF00" stroke-width="1" stroke-linecap="round" shape-rendering="crispEdges"/>
<line x1="776.8" y1="98.4" x2="785.4" y2="102.2" stroke="#00FF00" stroke-width="1" stroke-linecap="round" shape-rendering="crispEdges"/>
<line x1="785.4" y1="102.2" x2="801.0" y2="107.5" stroke="#00FF00" stroke-width="1" stroke-linecap="round" shape-rendering="crispEdges"/>
<line x1="801.0" y1="107.5" x2="811.6" y2="113.4" stroke="#00FF00" stroke-width="1" stroke-linecap="round" shape-rendering="crispEdges"/>
<line x1="811.6" y1="113.4" x2="820.0" y2="117.3" stroke="#00FF00" stroke-width="1" stroke-linecap="round" shape-rendering="crispEdges"/>
<line x1="820.0" y1="117.3" x2="823.0" y2="121.5" stroke="#00FF00" stroke-width="1" stroke-linecap="round" shape-rendering="crispEdges"/>
<line x1="823.0" y1="121.5" x2="834.4" y2="128.4" stroke="#00FF00" stroke-width="1" stroke-linecap="round" shape-rendering="crispEdges"/>
<line x1="834.4" y1="128.4" x2="842.4" y2="132.7" stroke="#00FF00" stroke-width="1" stroke-linecap="round" shape-rendering="crispEdges"/>
<line x1="842.4" y1="132.7" x2="852.2" y2="133.3" stroke="#00FF00" stroke-width="1" stroke-linecap="round" shape-rendering="crispEdges"/>
<line x1="852.2" y1="133.3" x2="868.8" y2="133.3" stroke="#00FF00" stroke-width="1" stroke-linecap="round" shape-rendering="crispEdges"/>
<line x1="868.8" y1="133.3" x2="880.3" y2="135.3" stroke="#00FF00" stroke-width="1" stroke-linecap="round" shape-rendering="crispEdges"/>
<line x1="880.3" y1="135.3" x2="891.7" y2="137.6" stroke="#00FF00" stroke-width="1" stroke-linecap="round" shape-rendering="crispEdges"/>
<line x1="891.7" y1="137.6" x2="903.2" y2="142.2" stroke="#00FF00" stroke-width="1" stroke-linecap="round" shape-rendering="crispEdges"/>
<line x1="903.2" y1="142.2" x2="914.7" y2="146.8" stroke="#00FF00" stroke-width="1" stroke-linecap="round" shape-rendering="crispEdges"/>
<line x1="914.7" y1="146.8" x2="926.1" y2="149.9" stroke="#00FF00" stroke-width="1" stroke-linecap="round" shape-rendering="crispEdges"/>
<line x1="926.1" y1="149.9" x2="938.8" y2="150.2" stroke="#00FF00" stroke-width="1" stroke-linecap="round" shape-rendering="crispEdges"/>
<line x1="938.8" y1="150.2" x2="949.0" y2="149.4" stroke="#FF0000" stroke-width="1" stroke-linecap="round" shape-rendering="crispEdges"/>
<line x1="949.0" y1="149.4" x2="960.0" y2="149.6" stroke="#00FF00" stroke-width="1" stroke-linecap="round" shape-rendering="crispEdges"/>
<line x1="960.0" y1="149.6" x2="976.8" y2="156.6" stroke="#00FF00" stroke-width="1" stroke-linecap="round" shape-rendering="crispEdges"/>
<line x1="976.8" y1="156.6" x2="991.5" y2="163.3" stroke="#00FF00" stroke-width="1" stroke-linecap="round" shape-rendering="crispEdges"/>
<line x1="991.5" y1="163.3" x2="996.7" y2="164.4" stroke="#00FF00" stroke-width="1" stroke-linecap="round" shape-rendering="crispEdges"/>
<line x1="996.7" y1="164.4" x2="1008.3" y2="164.3" stroke="#FF0000" stroke-width="1" stroke-linecap="round" shape-rendering="crispEdges"/>
<line x1="1008.3" y1="164.3" x2="1023.0" y2="158.7" stroke="#FF0000" stroke-width="1" stroke-linecap="round" shape-rendering="crispEdges"/>
<line x1="1023.0" y1="158.7" x2="1031.4" y2="156.2" stroke="#FF0000" stroke-width="1" stroke-linecap="round" shape-rendering="crispEdges"/>
<line x1="1031.4" y1="156.2" x2="1044.0" y2="156.2" stroke="#FF0000" stroke-width="1" stroke-linecap="round" shape-rendering="crispEdges"/>
<line x1="1044.0" y1="156.2" x2="1065.0" y2="158.7" stroke="#00FF00" stroke-width="1" stroke-linecap="round" shape-rendering="crispEdges"/>
<line x1="1065.0" y1="158.7" x2="1086.0" y2="166.0" stroke="#00FF00" stroke-width="1" stroke-linecap="round" shape-rendering="crispEdges"/>
<line x1="1086.0" y1="166.0" x2="1107.0" y2="174.4" stroke="#00FF00" stroke-width="1" stroke-linecap="round" shape-rendering="crispEdges"/>
<line x1="1107.0" y1="174.4" x2="1121.7" y2="181.4" stroke="#00FF00" stroke-width="1" stroke-linecap="round" shape-rendering="crispEdges"/>
<line x1="1121.7" y1="181.4" x2="1132.2" y2="181.4" stroke="#00FF00" stroke-width="1" stroke-linecap="round" shape-rendering="crispEdges"/>
<line x1="1132.2" y1="181.4" x2="1142.7" y2="181.2" stroke="#FF0000" stroke-width="1" stroke-linecap="round" shape-rendering="crispEdges"/>
<line x1="1142.7" y1="181.2" x2="1159.5" y2="171.3" stroke="#FF0000" stroke-width="1" stroke-linecap="round" shape-rendering="crispEdges"/>
<line x1="1159.5" y1="171.3" x2="1170.0" y2="163.9" stroke="#FF0000" stroke-width="1" stroke-linecap="round" shape-rendering="crispEdges"/>
<line x1="1170.0" y1="163.9" x2="1186.8" y2="158.7" stroke="#FF0000" stroke-width="1" stroke-linecap="round" shape-rendering="crispEdges"/>
<line x1="1186.8" y1="158.7" x2="1212.0" y2="157.0" stroke="#FF0000" stroke-width="1" stroke-linecap="round" shape-rendering="crispEdges"/>
<line x1="1212.0" y1="157.0" x2="1218.3" y2="155.5" stroke="#FF0000" stroke-width="1" stroke-linecap="round" shape-rendering="crispEdges"/>
<line x1="1218.3" y1="155.5" x2="1224.6" y2="155.5" stroke="#FF0000" stroke-width="1" stroke-linecap="round" shape-rendering="crispEdges"/>
<line x1="1224.6" y1="155.5" x2="1228.8" y2="156.6" stroke="#00FF00" stroke-width="1" stroke-linecap="round" shape-rendering="crispEdges"/>
<line x1="1228.8" y1="156.6" x2="1233.0" y2="155.5" stroke="#FF0000" stroke-width="1" stroke-linecap="round" shape-rendering="crispEdges"/>
<line x1="1233.0" y1="155.5" x2="1241.4" y2="155.5" stroke="#FF0000" stroke-width="1" stroke-linecap="round" shape-rendering="crispEdges"/>
<line x1="1241.4" y1="155.5" x2="1246.0" y2="156.5" stroke="#00FF00" stroke-width="1" stroke-linecap="round" shape-rendering="crispEdges"/>
<line x1="1246.0" y1="156.5" x2="1267.0" y2="158.6" stroke="#00FF00" stroke-width="1" stroke-linecap="round" shape-rendering="crispEdges"/>
<line x1="1267.0" y1="158.6" x2="1288.0" y2="160.7" stroke="#00FF00" stroke-width="1" stroke-linecap="round" shape-rendering="crispEdges"/>
<line x1="1288.0" y1="160.7" x2="1296.4" y2="161.4" stroke="#00FF00" stroke-width="1" stroke-linecap="round" shape-rendering="crispEdges"/>
<line x1="1296.4" y1="161.4" x2="1309.0" y2="159.7" stroke="#FF0000" stroke-width="1" stroke-linecap="round" shape-rendering="crispEdges"/>
<line x1="1309.0" y1="159.7" x2="1321.6" y2="149.2" stroke="#FF0000" stroke-width="1" stroke-linecap="round" shape-rendering="crispEdges"/>
<line x1="1321.6" y1="149.2" x2="1334.2" y2="136.6" stroke="#FF0000" stroke-width="1" stroke-linecap="round" shape-rendering="crispEdges"/>
<line x1="1334.2" y1="136.6" x2="1346.8" y2="128.2" stroke="#FF0000" stroke-width="1" stroke-linecap="round" shape-rendering="crispEdges"/>
<line x1="1346.8" y1="128.2" x2="1363.6" y2="120.8" stroke="#FF0000" stroke-width="1" stroke-linecap="round" shape-rendering="crispEdges"/>
<line x1="1363.6" y1="120.8" x2="1378.3" y2="114.5" stroke="#FF0000" stroke-width="1" stroke-linecap="round" shape-rendering="crispEdges"/>
<line x1="1378.3" y1="114.5" x2="1391.5" y2="109.3" stroke="#FF0000" stroke-width="1" stroke-linecap="round" shape-rendering="crispEdges"/>
<line x1="1391.5" y1="109.3" x2="1404.7" y2="109.5" stroke="#00FF00" stroke-width="1" stroke-linecap="round" shape-rendering="crispEdges"/>
<line x1="1404.7" y1="109.5" x2="1427.6" y2="118.5" stroke="#00FF00" stroke-width="1" stroke-linecap="round" shape-rendering="crispEdges"/>
<line x1="1427.6" y1="118.5" x2="1444.3" y2="116.2" stroke="#FF0000" stroke-width="1" stroke-linecap="round" shape-rendering="crispEdges"/>
<line x1="1444.3" y1="116.2" x2="1467.2" y2="106.4" stroke="#FF0000" stroke-width="1" stroke-linecap="round" shape-rendering="crispEdges"/>
<line x1="1467.2" y1="106.4" x2="1487.3" y2="101.3" stroke="#FF0000" stroke-width="1" stroke-linecap="round" shape-rendering="crispEdges"/>
<line x1="1487.3" y1="101.3" x2="1497.6" y2="100.4" stroke="#FF0000" stroke-width="1" stroke-linecap="round" shape-rendering="crispEdges"/>
<line x1="1497.6" y1="100.4" x2="1507.3" y2="101.5" stroke="#00FF00" stroke-width="1" stroke-linecap="round" shape-rendering="crispEdges"/>
<line x1="1507.3" y1="101.5" x2="1516.9" y2="101.3" stroke="#FF0000" stroke-width="1" stroke-linecap="round" shape-rendering="crispEdges"/>
<polyline points="862,133 890,132.7 925,131.2 938.8,130.4" fill="none" stroke="#FF40FF" stroke-width="1" shape-rendering="crispEdges"/>
<rect x="852" y="133" width="10" height="1" fill="#0030FF"/>
<rect x="862" y="133" width="5" height="1" fill="#FFC0FF"/>
<rect x="891" y="132" width="5" height="1" fill="#FFC0FF"/>
<rect x="925" y="130" width="9" height="1" fill="#FFD0FF"/>
<line x1="5.2" y1="314.0" x2="23.1" y2="312.3" stroke="#FF0000" stroke-width="2.2" stroke-linecap="round" shape-rendering="crispEdges"/>
<line x1="23.1" y1="312.3" x2="42.0" y2="300.3" stroke="#FF0000" stroke-width="2.2" stroke-linecap="round" shape-rendering="crispEdges"/>
<line x1="42.0" y1="300.3" x2="60.9" y2="288.8" stroke="#FF0000" stroke-width="2.2" stroke-linecap="round" shape-rendering="crispEdges"/>
<line x1="60.9" y1="288.8" x2="84.0" y2="278.3" stroke="#FF0000" stroke-width="2.2" stroke-linecap="round" shape-rendering="crispEdges"/>
<line x1="84.0" y1="278.3" x2="102.9" y2="268.8" stroke="#FF0000" stroke-width="2.2" stroke-linecap="round" shape-rendering="crispEdges"/>
<line x1="102.9" y1="268.8" x2="119.7" y2="267.2" stroke="#FF0000" stroke-width="2.2" stroke-linecap="round" shape-rendering="crispEdges"/>
<line x1="119.7" y1="267.2" x2="134.4" y2="269.9" stroke="#00FF00" stroke-width="2.2" stroke-linecap="round" shape-rendering="crispEdges"/>
<line x1="134.4" y1="269.9" x2="151.2" y2="278.3" stroke="#00FF00" stroke-width="2.2" stroke-linecap="round" shape-rendering="crispEdges"/>
<line x1="151.2" y1="278.3" x2="168.0" y2="293.0" stroke="#00FF00" stroke-width="2.2" stroke-linecap="round" shape-rendering="crispEdges"/>
<line x1="168.0" y1="293.0" x2="184.8" y2="304.5" stroke="#00FF00" stroke-width="2.2" stroke-linecap="round" shape-rendering="crispEdges"/>
<line x1="184.8" y1="304.5" x2="199.5" y2="316.1" stroke="#00FF00" stroke-width="2.2" stroke-linecap="round" shape-rendering="crispEdges"/>
<line x1="199.5" y1="316.1" x2="220.5" y2="326.2" stroke="#00FF00" stroke-width="2.2" stroke-linecap="round" shape-rendering="crispEdges"/>
<line x1="220.5" y1="326.2" x2="235.2" y2="327.0" stroke="#00FF00" stroke-width="2.2" stroke-linecap="round" shape-rendering="crispEdges"/>
<line x1="235.2" y1="327.0" x2="252.0" y2="325.5" stroke="#FF0000" stroke-width="2.2" stroke-linecap="round" shape-rendering="crispEdges"/>
<line x1="252.0" y1="325.5" x2="266.7" y2="322.4" stroke="#FF0000" stroke-width="2.2" stroke-linecap="round" shape-rendering="crispEdges"/>
<line x1="266.7" y1="322.4" x2="283.5" y2="312.9" stroke="#FF0000" stroke-width="2.2" stroke-linecap="round" shape-rendering="crispEdges"/>
<line x1="283.5" y1="312.9" x2="300.3" y2="302.4" stroke="#FF0000" stroke-width="2.2" stroke-linecap="round" shape-rendering="crispEdges"/>
<line x1="300.3" y1="302.4" x2="318.0" y2="288.8" stroke="#FF0000" stroke-width="2.2" stroke-linecap="round" shape-rendering="crispEdges"/>
<line x1="318.0" y1="288.8" x2="340.0" y2="268.8" stroke="#FF0000" stroke-width="2.2" stroke-linecap="round" shape-rendering="crispEdges"/>
<line x1="340.0" y1="268.8" x2="356.5" y2="253.7" stroke="#FF0000" stroke-width="2.2" stroke-linecap="round" shape-rendering="crispEdges"/>
<line x1="356.5" y1="253.7" x2="375.8" y2="235.8" stroke="#FF0000" stroke-width="2.2" stroke-linecap="round" shape-rendering="crispEdges"/>
<line x1="375.8" y1="235.8" x2="388.2" y2="225.5" stroke="#FF0000" stroke-width="2.2" stroke-linecap="round" shape-rendering="crispEdges"/>
<line x1="388.2" y1="225.5" x2="408.4" y2="210.8" stroke="#FF0000" stroke-width="2.2" stroke-linecap="round" shape-rendering="crispEdges"/>
<line x1="408.4" y1="210.8" x2="437.2" y2="193.9" stroke="#FF0000" stroke-width="2.2" stroke-linecap="round" shape-rendering="crispEdges"/>
<line x1="437.2" y1="193.9" x2="456.5" y2="184.3" stroke="#FF0000" stroke-width="2.2" stroke-linecap="round" shape-rendering="crispEdges"/>
<line x1="456.5" y1="184.3" x2="483.0" y2="173.4" stroke="#FF0000" stroke-width="2.2" stroke-linecap="round" shape-rendering="crispEdges"/>
<line x1="483.0" y1="173.4" x2="507.0" y2="163.0" stroke="#FF0000" stroke-width="2.2" stroke-linecap="round" shape-rendering="crispEdges"/>
<line x1="507.0" y1="163.0" x2="536.0" y2="153.5" stroke="#FF0000" stroke-width="2.2" stroke-linecap="round" shape-rendering="crispEdges"/>
<line x1="536.0" y1="153.5" x2="555.2" y2="145.8" stroke="#FF0000" stroke-width="2.2" stroke-linecap="round" shape-rendering="crispEdges"/>
<line x1="555.2" y1="145.8" x2="577.0" y2="134.9" stroke="#FF0000" stroke-width="2.2" stroke-linecap="round" shape-rendering="crispEdges"/>
<line x1="577.0" y1="134.9" x2="603.4" y2="124.0" stroke="#FF0000" stroke-width="2.2" stroke-linecap="round" shape-rendering="crispEdges"/>
<line x1="603.4" y1="124.0" x2="622.7" y2="116.9" stroke="#FF0000" stroke-width="2.2" stroke-linecap="round" shape-rendering="crispEdges"/>
<line x1="622.7" y1="116.9" x2="640.0" y2="114.6" stroke="#FF0000" stroke-width="2.2" stroke-linecap="round" shape-rendering="crispEdges"/>
<line x1="640.0" y1="114.6" x2="652.8" y2="114.9" stroke="#00FF00" stroke-width="2.2" stroke-linecap="round" shape-rendering="crispEdges"/>
<line x1="652.8" y1="114.9" x2="666.0" y2="117.3" stroke="#00FF00" stroke-width="2.2" stroke-linecap="round" shape-rendering="crispEdges"/>
<line x1="666.0" y1="117.3" x2="685.6" y2="118.6" stroke="#00FF00" stroke-width="2.2" stroke-linecap="round" shape-rendering="crispEdges"/>
<line x1="685.6" y1="118.6" x2="698.7" y2="118.7" stroke="#00FF00" stroke-width="2.2" stroke-linecap="round" shape-rendering="crispEdges"/>
<line x1="698.7" y1="118.7" x2="711.9" y2="116.0" stroke="#FF0000" stroke-width="2.2" stroke-linecap="round" shape-rendering="crispEdges"/>
<line x1="711.9" y1="116.0" x2="725.0" y2="113.6" stroke="#FF0000" stroke-width="2.2" stroke-linecap="round" shape-rendering="crispEdges"/>
<line x1="725.0" y1="113.6" x2="738.0" y2="111.0" stroke="#FF0000" stroke-width="2.2" stroke-linecap="round" shape-rendering="crispEdges"/>
<line x1="738.0" y1="111.0" x2="751.2" y2="108.8" stroke="#FF0000" stroke-width="2.2" stroke-linecap="round" shape-rendering="crispEdges"/>
<line x1="751.2" y1="108.8" x2="764.4" y2="105.5" stroke="#FF0000" stroke-width="2.2" stroke-linecap="round" shape-rendering="crispEdges"/>
<line x1="764.4" y1="105.5" x2="775.5" y2="104.4" stroke="#FF0000" stroke-width="2.2" stroke-linecap="round" shape-rendering="crispEdges"/>
<line x1="775.5" y1="104.4" x2="790.6" y2="104.6" stroke="#00FF00" stroke-width="2.2" stroke-linecap="round" shape-rendering="crispEdges"/>
<line x1="790.6" y1="104.6" x2="803.7" y2="106.8" stroke="#00FF00" stroke-width="2.2" stroke-linecap="round" shape-rendering="crispEdges"/>
<line x1="803.7" y1="106.8" x2="820.0" y2="112.0" stroke="#00FF00" stroke-width="2.2" stroke-linecap="round" shape-rendering="crispEdges"/>
<line x1="820.0" y1="112.0" x2="834.4" y2="118.7" stroke="#00FF00" stroke-width="2.2" stroke-linecap="round" shape-rendering="crispEdges"/>
<line x1="834.4" y1="118.7" x2="845.9" y2="122.1" stroke="#00FF00" stroke-width="2.2" stroke-linecap="round" shape-rendering="crispEdges"/>
<line x1="845.9" y1="122.1" x2="857.3" y2="124.4" stroke="#00FF00" stroke-width="2.2" stroke-linecap="round" shape-rendering="crispEdges"/>
<line x1="857.3" y1="124.4" x2="868.8" y2="126.7" stroke="#00FF00" stroke-width="2.2" stroke-linecap="round" shape-rendering="crispEdges"/>
<line x1="868.8" y1="126.7" x2="880.3" y2="129.0" stroke="#00FF00" stroke-width="2.2" stroke-linecap="round" shape-rendering="crispEdges"/>
<line x1="880.3" y1="129.0" x2="891.7" y2="131.3" stroke="#00FF00" stroke-width="2.2" stroke-linecap="round" shape-rendering="crispEdges"/>
<line x1="891.7" y1="131.3" x2="903.2" y2="134.2" stroke="#00FF00" stroke-width="2.2" stroke-linecap="round" shape-rendering="crispEdges"/>
<line x1="903.2" y1="134.2" x2="914.7" y2="138.2" stroke="#00FF00" stroke-width="2.2" stroke-linecap="round" shape-rendering="crispEdges"/>
<line x1="914.7" y1="138.2" x2="926.1" y2="142.2" stroke="#00FF00" stroke-width="2.2" stroke-linecap="round" shape-rendering="crispEdges"/>
<line x1="926.1" y1="142.2" x2="937.6" y2="143.3" stroke="#00FF00" stroke-width="2.2" stroke-linecap="round" shape-rendering="crispEdges"/>
<line x1="937.6" y1="143.3" x2="949.1" y2="144.8" stroke="#00FF00" stroke-width="2.2" stroke-linecap="round" shape-rendering="crispEdges"/>
<line x1="949.1" y1="144.8" x2="960.0" y2="146.2" stroke="#00FF00" stroke-width="2.2" stroke-linecap="round" shape-rendering="crispEdges"/>
<line x1="960.0" y1="146.2" x2="981.0" y2="152.4" stroke="#00FF00" stroke-width="2.2" stroke-linecap="round" shape-rendering="crispEdges"/>
<line x1="981.0" y1="152.4" x2="1002.0" y2="157.0" stroke="#00FF00" stroke-width="2.2" stroke-linecap="round" shape-rendering="crispEdges"/>
<line x1="1002.0" y1="157.0" x2="1016.7" y2="157.0" stroke="#00FF00" stroke-width="2.2" stroke-linecap="round" shape-rendering="crispEdges"/>
<line x1="1016.7" y1="157.0" x2="1031.4" y2="156.0" stroke="#FF0000" stroke-width="2.2" stroke-linecap="round" shape-rendering="crispEdges"/>
<line x1="1031.4" y1="156.0" x2="1045.0" y2="156.0" stroke="#FF0000" stroke-width="2.2" stroke-linecap="round" shape-rendering="crispEdges"/>
<line x1="1045.0" y1="156.0" x2="1065.0" y2="157.6" stroke="#00FF00" stroke-width="2.2" stroke-linecap="round" shape-rendering="crispEdges"/>
<line x1="1065.0" y1="157.6" x2="1086.0" y2="162.9" stroke="#00FF00" stroke-width="2.2" stroke-linecap="round" shape-rendering="crispEdges"/>
<line x1="1086.0" y1="162.9" x2="1107.0" y2="168.1" stroke="#00FF00" stroke-width="2.2" stroke-linecap="round" shape-rendering="crispEdges"/>
<line x1="1107.0" y1="168.1" x2="1128.0" y2="174.0" stroke="#00FF00" stroke-width="2.2" stroke-linecap="round" shape-rendering="crispEdges"/>
<line x1="1128.0" y1="174.0" x2="1141.6" y2="175.0" stroke="#00FF00" stroke-width="2.2" stroke-linecap="round" shape-rendering="crispEdges"/>
<line x1="1141.6" y1="175.0" x2="1159.5" y2="173.4" stroke="#FF0000" stroke-width="2.2" stroke-linecap="round" shape-rendering="crispEdges"/>
<line x1="1159.5" y1="173.4" x2="1180.5" y2="167.0" stroke="#FF0000" stroke-width="2.2" stroke-linecap="round" shape-rendering="crispEdges"/>
<line x1="1180.5" y1="167.0" x2="1201.5" y2="161.8" stroke="#FF0000" stroke-width="2.2" stroke-linecap="round" shape-rendering="crispEdges"/>
<line x1="1201.5" y1="161.8" x2="1222.5" y2="158.7" stroke="#FF0000" stroke-width="2.2" stroke-linecap="round" shape-rendering="crispEdges"/>
<line x1="1222.5" y1="158.7" x2="1243.5" y2="157.6" stroke="#FF0000" stroke-width="2.2" stroke-linecap="round" shape-rendering="crispEdges"/>
<line x1="1243.5" y1="157.6" x2="1257.0" y2="157.2" stroke="#FF0000" stroke-width="2.2" stroke-linecap="round" shape-rendering="crispEdges"/>
<line x1="1257.0" y1="157.2" x2="1277.5" y2="160.1" stroke="#00FF00" stroke-width="2.2" stroke-linecap="round" shape-rendering="crispEdges"/>
<line x1="1277.5" y1="160.1" x2="1296.4" y2="161.8" stroke="#00FF00" stroke-width="2.2" stroke-linecap="round" shape-rendering="crispEdges"/>
<line x1="1296.4" y1="161.8" x2="1313.2" y2="159.7" stroke="#FF0000" stroke-width="2.2" stroke-linecap="round" shape-rendering="crispEdges"/>
<line x1="1313.2" y1="159.7" x2="1330.0" y2="151.3" stroke="#FF0000" stroke-width="2.2" stroke-linecap="round" shape-rendering="crispEdges"/>
<line x1="1330.0" y1="151.3" x2="1351.0" y2="138.7" stroke="#FF0000" stroke-width="2.2" stroke-linecap="round" shape-rendering="crispEdges"/>
<line x1="1351.0" y1="138.7" x2="1372.0" y2="130.3" stroke="#FF0000" stroke-width="2.2" stroke-linecap="round" shape-rendering="crispEdges"/>
<line x1="1372.0" y1="130.3" x2="1386.9" y2="123.6" stroke="#FF0000" stroke-width="2.2" stroke-linecap="round" shape-rendering="crispEdges"/>
<line x1="1386.9" y1="123.6" x2="1411.0" y2="118.5" stroke="#FF0000" stroke-width="2.2" stroke-linecap="round" shape-rendering="crispEdges"/>
<line x1="1411.0" y1="118.5" x2="1431.0" y2="119.6" stroke="#00FF00" stroke-width="2.2" stroke-linecap="round" shape-rendering="crispEdges"/>
<line x1="1431.0" y1="119.6" x2="1446.0" y2="118.0" stroke="#FF0000" stroke-width="2.2" stroke-linecap="round" shape-rendering="crispEdges"/>
<line x1="1446.0" y1="118.0" x2="1460.4" y2="116.2" stroke="#FF0000" stroke-width="2.2" stroke-linecap="round" shape-rendering="crispEdges"/>
<line x1="1460.4" y1="116.2" x2="1474.5" y2="113.6" stroke="#FF0000" stroke-width="2.2" stroke-linecap="round" shape-rendering="crispEdges"/>
<line x1="1474.5" y1="113.6" x2="1493.4" y2="108.0" stroke="#FF0000" stroke-width="2.2" stroke-linecap="round" shape-rendering="crispEdges"/>
<line x1="1493.4" y1="108.0" x2="1508.5" y2="105.0" stroke="#FF0000" stroke-width="2.2" stroke-linecap="round" shape-rendering="crispEdges"/>
<line x1="1508.5" y1="105.0" x2="1518.0" y2="104.9" stroke="#FF0000" stroke-width="2.2" stroke-linecap="round" shape-rendering="crispEdges"/>
<path d="M13.2 517.5h3M14.7 516v3" stroke="#FF00FF" stroke-width="1"/>
<path d="M13.2 827.5h3M14.7 826v3" stroke="#FFFFFF" stroke-width="1" shape-rendering="crispEdges"/>
<path d="M22.8 517.5h3M24.3 516v3" stroke="#FF00FF" stroke-width="1"/>
<path d="M22.8 827.5h3M24.3 826v3" stroke="#FFFFFF" stroke-width="1" shape-rendering="crispEdges"/>
<path d="M32.4 517.5h3M33.9 516v3" stroke="#FF00FF" stroke-width="1"/>
<path d="M32.4 827.5h3M33.9 826v3" stroke="#FFFFFF" stroke-width="1" shape-rendering="crispEdges"/>
<path d="M42.1 517.5h3M43.6 516v3" stroke="#FF00FF" stroke-width="1"/>
<path d="M42.1 827.5h3M43.6 826v3" stroke="#FFFFFF" stroke-width="1" shape-rendering="crispEdges"/>
<path d="M51.7 517.5h3M53.2 516v3" stroke="#FF00FF" stroke-width="1"/>
<path d="M51.7 827.5h3M53.2 826v3" stroke="#FFFFFF" stroke-width="1" shape-rendering="crispEdges"/>
<path d="M61.3 517.5h3M62.8 516v3" stroke="#FF00FF" stroke-width="1"/>
<path d="M61.3 827.5h3M62.8 826v3" stroke="#FFFFFF" stroke-width="1" shape-rendering="crispEdges"/>
<path d="M71.0 517.5h3M72.5 516v3" stroke="#FF00FF" stroke-width="1"/>
<path d="M71.0 827.5h3M72.5 826v3" stroke="#FFFFFF" stroke-width="1" shape-rendering="crispEdges"/>
<path d="M80.6 517.5h3M82.1 516v3" stroke="#FF00FF" stroke-width="1"/>
<path d="M80.6 827.5h3M82.1 826v3" stroke="#FFFFFF" stroke-width="1" shape-rendering="crispEdges"/>
<path d="M90.2 517.5h3M91.7 516v3" stroke="#FF00FF" stroke-width="1"/>
<path d="M90.2 827.5h3M91.7 826v3" stroke="#FFFFFF" stroke-width="1" shape-rendering="crispEdges"/>
<path d="M99.9 517.5h3M101.4 516v3" stroke="#FF00FF" stroke-width="1"/>
<path d="M99.9 827.5h3M101.4 826v3" stroke="#FFFFFF" stroke-width="1" shape-rendering="crispEdges"/>
<path d="M109.5 517.5h3M111.0 516v3" stroke="#FF00FF" stroke-width="1"/>
<path d="M109.5 827.5h3M111.0 826v3" stroke="#FFFFFF" stroke-width="1" shape-rendering="crispEdges"/>
<path d="M119.1 517.5h3M120.6 516v3" stroke="#FF00FF" stroke-width="1"/>
<path d="M119.1 827.5h3M120.6 826v3" stroke="#FFFFFF" stroke-width="1" shape-rendering="crispEdges"/>
<path d="M128.8 517.5h3M130.3 516v3" stroke="#FF00FF" stroke-width="1"/>
<path d="M128.8 827.5h3M130.3 826v3" stroke="#FFFFFF" stroke-width="1" shape-rendering="crispEdges"/>
<path d="M138.4 517.5h3M139.9 516v3" stroke="#FF00FF" stroke-width="1"/>
<path d="M138.4 827.5h3M139.9 826v3" stroke="#FFFFFF" stroke-width="1" shape-rendering="crispEdges"/>
<path d="M148.0 517.5h3M149.5 516v3" stroke="#FF00FF" stroke-width="1"/>
<path d="M148.0 827.5h3M149.5 826v3" stroke="#FFFFFF" stroke-width="1" shape-rendering="crispEdges"/>
<path d="M157.7 517.5h3M159.2 516v3" stroke="#FF00FF" stroke-width="1"/>
<path d="M157.7 827.5h3M159.2 826v3" stroke="#FFFFFF" stroke-width="1" shape-rendering="crispEdges"/>
<path d="M167.3 517.5h3M168.8 516v3" stroke="#FF00FF" stroke-width="1"/>
<path d="M167.3 827.5h3M168.8 826v3" stroke="#FFFFFF" stroke-width="1" shape-rendering="crispEdges"/>
<path d="M176.9 517.5h3M178.4 516v3" stroke="#FF00FF" stroke-width="1"/>
<path d="M176.9 827.5h3M178.4 826v3" stroke="#FFFFFF" stroke-width="1" shape-rendering="crispEdges"/>
<path d="M186.6 517.5h3M188.1 516v3" stroke="#FF00FF" stroke-width="1"/>
<path d="M186.6 827.5h3M188.1 826v3" stroke="#FFFFFF" stroke-width="1" shape-rendering="crispEdges"/>
<path d="M196.2 517.5h3M197.7 516v3" stroke="#FF00FF" stroke-width="1"/>
<path d="M196.2 827.5h3M197.7 826v3" stroke="#FFFFFF" stroke-width="1" shape-rendering="crispEdges"/>
<path d="M205.8 517.5h3M207.3 516v3" stroke="#FF00FF" stroke-width="1"/>
<path d="M205.8 827.5h3M207.3 826v3" stroke="#FFFFFF" stroke-width="1" shape-rendering="crispEdges"/>
<path d="M215.5 517.5h3M217.0 516v3" stroke="#FF00FF" stroke-width="1"/>
<path d="M215.5 827.5h3M217.0 826v3" stroke="#FFFFFF" stroke-width="1" shape-rendering="crispEdges"/>
<path d="M225.1 517.5h3M226.6 516v3" stroke="#FF00FF" stroke-width="1"/>
<path d="M225.1 827.5h3M226.6 826v3" stroke="#FFFFFF" stroke-width="1" shape-rendering="crispEdges"/>
<path d="M234.8 517.5h3M236.3 516v3" stroke="#FF00FF" stroke-width="1"/>
<path d="M234.8 827.5h3M236.3 826v3" stroke="#FFFFFF" stroke-width="1" shape-rendering="crispEdges"/>
<path d="M244.4 517.5h3M245.9 516v3" stroke="#FF00FF" stroke-width="1"/>
<path d="M244.4 827.5h3M245.9 826v3" stroke="#FFFFFF" stroke-width="1" shape-rendering="crispEdges"/>
<path d="M254.0 517.5h3M255.5 516v3" stroke="#FF00FF" stroke-width="1"/>
<path d="M254.0 827.5h3M255.5 826v3" stroke="#FFFFFF" stroke-width="1" shape-rendering="crispEdges"/>
<path d="M263.7 517.5h3M265.2 516v3" stroke="#FF00FF" stroke-width="1"/>
<path d="M263.7 827.5h3M265.2 826v3" stroke="#FFFFFF" stroke-width="1" shape-rendering="crispEdges"/>
<path d="M273.3 517.5h3M274.8 516v3" stroke="#FF00FF" stroke-width="1"/>
<path d="M273.3 827.5h3M274.8 826v3" stroke="#FFFFFF" stroke-width="1" shape-rendering="crispEdges"/>
<path d="M282.9 517.5h3M284.4 516v3" stroke="#FF00FF" stroke-width="1"/>
<path d="M282.9 827.5h3M284.4 826v3" stroke="#FFFFFF" stroke-width="1" shape-rendering="crispEdges"/>
<path d="M292.6 517.5h3M294.1 516v3" stroke="#FF00FF" stroke-width="1"/>
<path d="M292.6 827.5h3M294.1 826v3" stroke="#FFFFFF" stroke-width="1" shape-rendering="crispEdges"/>
<path d="M302.2 517.5h3M303.7 516v3" stroke="#FF00FF" stroke-width="1"/>
<path d="M302.2 827.5h3M303.7 826v3" stroke="#FFFFFF" stroke-width="1" shape-rendering="crispEdges"/>
<path d="M311.8 517.5h3M313.3 516v3" stroke="#FF00FF" stroke-width="1"/>
<path d="M311.8 827.5h3M313.3 826v3" stroke="#FFFFFF" stroke-width="1" shape-rendering="crispEdges"/>
<path d="M321.5 517.5h3M323.0 516v3" stroke="#FF00FF" stroke-width="1"/>
<path d="M321.5 827.5h3M323.0 826v3" stroke="#FFFFFF" stroke-width="1" shape-rendering="crispEdges"/>
<path d="M331.1 517.5h3M332.6 516v3" stroke="#FF00FF" stroke-width="1"/>
<path d="M331.1 827.5h3M332.6 826v3" stroke="#FFFFFF" stroke-width="1" shape-rendering="crispEdges"/>
<path d="M340.7 517.5h3M342.2 516v3" stroke="#FF00FF" stroke-width="1"/>
<path d="M340.7 827.5h3M342.2 826v3" stroke="#FFFFFF" stroke-width="1" shape-rendering="crispEdges"/>
<path d="M350.4 517.5h3M351.9 516v3" stroke="#FF00FF" stroke-width="1"/>
<path d="M350.4 827.5h3M351.9 826v3" stroke="#FFFFFF" stroke-width="1" shape-rendering="crispEdges"/>
<path d="M360.0 517.5h3M361.5 516v3" stroke="#FF00FF" stroke-width="1"/>
<path d="M360.0 827.5h3M361.5 826v3" stroke="#FFFFFF" stroke-width="1" shape-rendering="crispEdges"/>
<path d="M369.6 517.5h3M371.1 516v3" stroke="#FF00FF" stroke-width="1"/>
<path d="M369.6 827.5h3M371.1 826v3" stroke="#FFFFFF" stroke-width="1" shape-rendering="crispEdges"/>
<path d="M379.3 517.5h3M380.8 516v3" stroke="#FF00FF" stroke-width="1"/>
<path d="M379.3 827.5h3M380.8 826v3" stroke="#FFFFFF" stroke-width="1" shape-rendering="crispEdges"/>
<path d="M388.9 517.5h3M390.4 516v3" stroke="#FF00FF" stroke-width="1"/>
<path d="M388.9 827.5h3M390.4 826v3" stroke="#FFFFFF" stroke-width="1" shape-rendering="crispEdges"/>
<path d="M398.5 517.5h3M400.0 516v3" stroke="#FF00FF" stroke-width="1"/>
<path d="M398.5 827.5h3M400.0 826v3" stroke="#FFFFFF" stroke-width="1" shape-rendering="crispEdges"/>
<path d="M408.2 517.5h3M409.7 516v3" stroke="#FF00FF" stroke-width="1"/>
<path d="M408.2 827.5h3M409.7 826v3" stroke="#FFFFFF" stroke-width="1" shape-rendering="crispEdges"/>
<path d="M417.8 517.5h3M419.3 516v3" stroke="#FF00FF" stroke-width="1"/>
<path d="M417.8 827.5h3M419.3 826v3" stroke="#FFFFFF" stroke-width="1" shape-rendering="crispEdges"/>
<path d="M427.5 517.5h3M429.0 516v3" stroke="#FF00FF" stroke-width="1"/>
<path d="M427.5 827.5h3M429.0 826v3" stroke="#FFFFFF" stroke-width="1" shape-rendering="crispEdges"/>
<path d="M437.1 517.5h3M438.6 516v3" stroke="#FF00FF" stroke-width="1"/>
<path d="M437.1 827.5h3M438.6 826v3" stroke="#FFFFFF" stroke-width="1" shape-rendering="crispEdges"/>
<path d="M446.7 517.5h3M448.2 516v3" stroke="#FF00FF" stroke-width="1"/>
<path d="M446.7 827.5h3M448.2 826v3" stroke="#FFFFFF" stroke-width="1" shape-rendering="crispEdges"/>
<path d="M456.4 517.5h3M457.9 516v3" stroke="#FF00FF" stroke-width="1"/>
<path d="M456.4 827.5h3M457.9 826v3" stroke="#FFFFFF" stroke-width="1" shape-rendering="crispEdges"/>
<path d="M466.0 517.5h3M467.5 516v3" stroke="#FF00FF" stroke-width="1"/>
<path d="M466.0 827.5h3M467.5 826v3" stroke="#FFFFFF" stroke-width="1" shape-rendering="crispEdges"/>
<path d="M475.6 517.5h3M477.1 516v3" stroke="#FF00FF" stroke-width="1"/>
<path d="M475.6 827.5h3M477.1 826v3" stroke="#FFFFFF" stroke-width="1" shape-rendering="crispEdges"/>
<path d="M485.3 517.5h3M486.8 516v3" stroke="#FF00FF" stroke-width="1"/>
<path d="M485.3 827.5h3M486.8 826v3" stroke="#FFFFFF" stroke-width="1" shape-rendering="crispEdges"/>
<path d="M494.9 517.5h3M496.4 516v3" stroke="#FF00FF" stroke-width="1"/>
<path d="M494.9 827.5h3M496.4 826v3" stroke="#FFFFFF" stroke-width="1" shape-rendering="crispEdges"/>
<path d="M504.5 517.5h3M506.0 516v3" stroke="#FF00FF" stroke-width="1"/>
<path d="M504.5 827.5h3M506.0 826v3" stroke="#FFFFFF" stroke-width="1" shape-rendering="crispEdges"/>
<path d="M514.2 517.5h3M515.7 516v3" stroke="#FF00FF" stroke-width="1"/>
<path d="M514.2 827.5h3M515.7 826v3" stroke="#FFFFFF" stroke-width="1" shape-rendering="crispEdges"/>
<path d="M523.8 517.5h3M525.3 516v3" stroke="#FF00FF" stroke-width="1"/>
<path d="M523.8 827.5h3M525.3 826v3" stroke="#FFFFFF" stroke-width="1" shape-rendering="crispEdges"/>
<path d="M533.4 517.5h3M534.9 516v3" stroke="#FF00FF" stroke-width="1"/>
<path d="M533.4 827.5h3M534.9 826v3" stroke="#FFFFFF" stroke-width="1" shape-rendering="crispEdges"/>
<path d="M543.1 517.5h3M544.6 516v3" stroke="#FF00FF" stroke-width="1"/>
<path d="M543.1 827.5h3M544.6 826v3" stroke="#FFFFFF" stroke-width="1" shape-rendering="crispEdges"/>
<path d="M552.7 517.5h3M554.2 516v3" stroke="#FF00FF" stroke-width="1"/>
<path d="M552.7 827.5h3M554.2 826v3" stroke="#FFFFFF" stroke-width="1" shape-rendering="crispEdges"/>
<path d="M562.3 517.5h3M563.8 516v3" stroke="#FF00FF" stroke-width="1"/>
<path d="M562.3 827.5h3M563.8 826v3" stroke="#FFFFFF" stroke-width="1" shape-rendering="crispEdges"/>
<path d="M572.0 517.5h3M573.5 516v3" stroke="#FF00FF" stroke-width="1"/>
<path d="M572.0 827.5h3M573.5 826v3" stroke="#FFFFFF" stroke-width="1" shape-rendering="crispEdges"/>
<path d="M581.6 517.5h3M583.1 516v3" stroke="#FF00FF" stroke-width="1"/>
<path d="M581.6 827.5h3M583.1 826v3" stroke="#FFFFFF" stroke-width="1" shape-rendering="crispEdges"/>
<path d="M591.2 517.5h3M592.8 516v3" stroke="#FF00FF" stroke-width="1"/>
<path d="M591.2 827.5h3M592.8 826v3" stroke="#FFFFFF" stroke-width="1" shape-rendering="crispEdges"/>
<path d="M600.9 517.5h3M602.4 516v3" stroke="#FF00FF" stroke-width="1"/>
<path d="M600.9 827.5h3M602.4 826v3" stroke="#FFFFFF" stroke-width="1" shape-rendering="crispEdges"/>
<path d="M610.5 517.5h3M612.0 516v3" stroke="#FF00FF" stroke-width="1"/>
<path d="M610.5 827.5h3M612.0 826v3" stroke="#FFFFFF" stroke-width="1" shape-rendering="crispEdges"/>
<path d="M620.2 517.5h3M621.7 516v3" stroke="#FF00FF" stroke-width="1"/>
<path d="M620.2 827.5h3M621.7 826v3" stroke="#FFFFFF" stroke-width="1" shape-rendering="crispEdges"/>
<path d="M629.8 517.5h3M631.3 516v3" stroke="#FF00FF" stroke-width="1"/>
<path d="M629.8 827.5h3M631.3 826v3" stroke="#FFFFFF" stroke-width="1" shape-rendering="crispEdges"/>
<path d="M639.4 517.5h3M640.9 516v3" stroke="#FF00FF" stroke-width="1"/>
<path d="M639.4 827.5h3M640.9 826v3" stroke="#FFFFFF" stroke-width="1" shape-rendering="crispEdges"/>
<path d="M649.1 517.5h3M650.6 516v3" stroke="#FF00FF" stroke-width="1"/>
<path d="M649.1 827.5h3M650.6 826v3" stroke="#FFFFFF" stroke-width="1" shape-rendering="crispEdges"/>
<path d="M658.7 517.5h3M660.2 516v3" stroke="#FF00FF" stroke-width="1"/>
<path d="M658.7 827.5h3M660.2 826v3" stroke="#FFFFFF" stroke-width="1" shape-rendering="crispEdges"/>
<path d="M668.3 517.5h3M669.8 516v3" stroke="#FF00FF" stroke-width="1"/>
<path d="M668.3 827.5h3M669.8 826v3" stroke="#FFFFFF" stroke-width="1" shape-rendering="crispEdges"/>
<path d="M678.0 517.5h3M679.5 516v3" stroke="#FF00FF" stroke-width="1"/>
<path d="M678.0 827.5h3M679.5 826v3" stroke="#FFFFFF" stroke-width="1" shape-rendering="crispEdges"/>
<path d="M687.6 517.5h3M689.1 516v3" stroke="#FF00FF" stroke-width="1"/>
<path d="M687.6 827.5h3M689.1 826v3" stroke="#FFFFFF" stroke-width="1" shape-rendering="crispEdges"/>
<path d="M697.2 517.5h3M698.7 516v3" stroke="#FF00FF" stroke-width="1"/>
<path d="M697.2 827.5h3M698.7 826v3" stroke="#FFFFFF" stroke-width="1" shape-rendering="crispEdges"/>
<path d="M706.9 517.5h3M708.4 516v3" stroke="#FF00FF" stroke-width="1"/>
<path d="M706.9 827.5h3M708.4 826v3" stroke="#FFFFFF" stroke-width="1" shape-rendering="crispEdges"/>
<path d="M716.5 517.5h3M718.0 516v3" stroke="#FF00FF" stroke-width="1"/>
<path d="M716.5 827.5h3M718.0 826v3" stroke="#FFFFFF" stroke-width="1" shape-rendering="crispEdges"/>
<path d="M726.1 517.5h3M727.6 516v3" stroke="#FF00FF" stroke-width="1"/>
<path d="M726.1 827.5h3M727.6 826v3" stroke="#FFFFFF" stroke-width="1" shape-rendering="crispEdges"/>
<path d="M735.8 517.5h3M737.3 516v3" stroke="#FF00FF" stroke-width="1"/>
<path d="M735.8 827.5h3M737.3 826v3" stroke="#FFFFFF" stroke-width="1" shape-rendering="crispEdges"/>
<path d="M745.4 517.5h3M746.9 516v3" stroke="#FF00FF" stroke-width="1"/>
<path d="M745.4 827.5h3M746.9 826v3" stroke="#FFFFFF" stroke-width="1" shape-rendering="crispEdges"/>
<path d="M755.0 517.5h3M756.5 516v3" stroke="#FF00FF" stroke-width="1"/>
<path d="M755.0 827.5h3M756.5 826v3" stroke="#FFFFFF" stroke-width="1" shape-rendering="crispEdges"/>
<path d="M764.7 517.5h3M766.2 516v3" stroke="#FF00FF" stroke-width="1"/>
<path d="M764.7 827.5h3M766.2 826v3" stroke="#FFFFFF" stroke-width="1" shape-rendering="crispEdges"/>
<path d="M774.3 517.5h3M775.8 516v3" stroke="#FF00FF" stroke-width="1"/>
<path d="M774.3 827.5h3M775.8 826v3" stroke="#FFFFFF" stroke-width="1" shape-rendering="crispEdges"/>
<path d="M783.9 517.5h3M785.4 516v3" stroke="#FF00FF" stroke-width="1"/>
<path d="M783.9 827.5h3M785.4 826v3" stroke="#FFFFFF" stroke-width="1" shape-rendering="crispEdges"/>
<path d="M793.6 517.5h3M795.1 516v3" stroke="#FF00FF" stroke-width="1"/>
<path d="M793.6 827.5h3M795.1 826v3" stroke="#FFFFFF" stroke-width="1" shape-rendering="crispEdges"/>
<path d="M803.2 517.5h3M804.7 516v3" stroke="#FF00FF" stroke-width="1"/>
<path d="M803.2 827.5h3M804.7 826v3" stroke="#FFFFFF" stroke-width="1" shape-rendering="crispEdges"/>
<path d="M812.9 517.5h3M814.4 516v3" stroke="#FF00FF" stroke-width="1"/>
<path d="M812.9 827.5h3M814.4 826v3" stroke="#FFFFFF" stroke-width="1" shape-rendering="crispEdges"/>
<path d="M822.5 517.5h3M824.0 516v3" stroke="#FF00FF" stroke-width="1"/>
<path d="M822.5 827.5h3M824.0 826v3" stroke="#FFFFFF" stroke-width="1" shape-rendering="crispEdges"/>
<path d="M832.1 517.5h3M833.6 516v3" stroke="#FF00FF" stroke-width="1"/>
<path d="M832.1 827.5h3M833.6 826v3" stroke="#FFFFFF" stroke-width="1" shape-rendering="crispEdges"/>
<path d="M841.8 517.5h3M843.3 516v3" stroke="#FF00FF" stroke-width="1"/>
<path d="M841.8 827.5h3M843.3 826v3" stroke="#FFFFFF" stroke-width="1" shape-rendering="crispEdges"/>
<path d="M851.4 517.5h3M852.9 516v3" stroke="#FF00FF" stroke-width="1"/>
<path d="M851.4 827.5h3M852.9 826v3" stroke="#FFFFFF" stroke-width="1" shape-rendering="crispEdges"/>
<path d="M861.0 517.5h3M862.5 516v3" stroke="#FF00FF" stroke-width="1"/>
<path d="M861.0 827.5h3M862.5 826v3" stroke="#FFFFFF" stroke-width="1" shape-rendering="crispEdges"/>
<path d="M870.7 517.5h3M872.2 516v3" stroke="#FF00FF" stroke-width="1"/>
<path d="M870.7 827.5h3M872.2 826v3" stroke="#FFFFFF" stroke-width="1" shape-rendering="crispEdges"/>
<path d="M880.3 517.5h3M881.8 516v3" stroke="#FF00FF" stroke-width="1"/>
<path d="M880.3 827.5h3M881.8 826v3" stroke="#FFFFFF" stroke-width="1" shape-rendering="crispEdges"/>
<path d="M889.9 517.5h3M891.4 516v3" stroke="#FF00FF" stroke-width="1"/>
<path d="M889.9 827.5h3M891.4 826v3" stroke="#FFFFFF" stroke-width="1" shape-rendering="crispEdges"/>
<path d="M899.6 517.5h3M901.1 516v3" stroke="#FF00FF" stroke-width="1"/>
<path d="M899.6 827.5h3M901.1 826v3" stroke="#FFFFFF" stroke-width="1" shape-rendering="crispEdges"/>
<path d="M909.2 517.5h3M910.7 516v3" stroke="#FF00FF" stroke-width="1"/>
<path d="M909.2 827.5h3M910.7 826v3" stroke="#FFFFFF" stroke-width="1" shape-rendering="crispEdges"/>
<path d="M918.8 517.5h3M920.3 516v3" stroke="#FF00FF" stroke-width="1"/>
<path d="M918.8 827.5h3M920.3 826v3" stroke="#FFFFFF" stroke-width="1" shape-rendering="crispEdges"/>
<path d="M928.5 517.5h3M930.0 516v3" stroke="#FF00FF" stroke-width="1"/>
<path d="M928.5 827.5h3M930.0 826v3" stroke="#FFFFFF" stroke-width="1" shape-rendering="crispEdges"/>
<path d="M938.1 517.5h3M939.6 516v3" stroke="#FF00FF" stroke-width="1"/>
<path d="M938.1 827.5h3M939.6 826v3" stroke="#FFFFFF" stroke-width="1" shape-rendering="crispEdges"/>
<path d="M947.7 517.5h3M949.2 516v3" stroke="#FF00FF" stroke-width="1"/>
<path d="M947.7 827.5h3M949.2 826v3" stroke="#FFFFFF" stroke-width="1" shape-rendering="crispEdges"/>
<path d="M957.4 517.5h3M958.9 516v3" stroke="#FF00FF" stroke-width="1"/>
<path d="M957.4 827.5h3M958.9 826v3" stroke="#FFFFFF" stroke-width="1" shape-rendering="crispEdges"/>
<path d="M967.0 517.5h3M968.5 516v3" stroke="#FF00FF" stroke-width="1"/>
<path d="M967.0 827.5h3M968.5 826v3" stroke="#FFFFFF" stroke-width="1" shape-rendering="crispEdges"/>
<path d="M976.6 517.5h3M978.1 516v3" stroke="#FF00FF" stroke-width="1"/>
<path d="M976.6 827.5h3M978.1 826v3" stroke="#FFFFFF" stroke-width="1" shape-rendering="crispEdges"/>
<path d="M986.3 517.5h3M987.8 516v3" stroke="#FF00FF" stroke-width="1"/>
<path d="M986.3 827.5h3M987.8 826v3" stroke="#FFFFFF" stroke-width="1" shape-rendering="crispEdges"/>
<path d="M995.9 517.5h3M997.4 516v3" stroke="#FF00FF" stroke-width="1"/>
<path d="M995.9 827.5h3M997.4 826v3" stroke="#FFFFFF" stroke-width="1" shape-rendering="crispEdges"/>
<path d="M1005.6 517.5h3M1007.1 516v3" stroke="#FF00FF" stroke-width="1"/>
<path d="M1005.6 827.5h3M1007.1 826v3" stroke="#FFFFFF" stroke-width="1" shape-rendering="crispEdges"/>
<path d="M1015.2 517.5h3M1016.7 516v3" stroke="#FF00FF" stroke-width="1"/>
<path d="M1015.2 827.5h3M1016.7 826v3" stroke="#FFFFFF" stroke-width="1" shape-rendering="crispEdges"/>
<path d="M1024.8 517.5h3M1026.3 516v3" stroke="#FF00FF" stroke-width="1"/>
<path d="M1024.8 827.5h3M1026.3 826v3" stroke="#FFFFFF" stroke-width="1" shape-rendering="crispEdges"/>
<path d="M1034.5 517.5h3M1036.0 516v3" stroke="#FF00FF" stroke-width="1"/>
<path d="M1034.5 827.5h3M1036.0 826v3" stroke="#FFFFFF" stroke-width="1" shape-rendering="crispEdges"/>
<path d="M1044.1 517.5h3M1045.6 516v3" stroke="#FF00FF" stroke-width="1"/>
<path d="M1044.1 827.5h3M1045.6 826v3" stroke="#FFFFFF" stroke-width="1" shape-rendering="crispEdges"/>
<path d="M1053.7 517.5h3M1055.2 516v3" stroke="#FF00FF" stroke-width="1"/>
<path d="M1053.7 827.5h3M1055.2 826v3" stroke="#FFFFFF" stroke-width="1" shape-rendering="crispEdges"/>
<path d="M1063.4 517.5h3M1064.9 516v3" stroke="#FF00FF" stroke-width="1"/>
<path d="M1063.4 827.5h3M1064.9 826v3" stroke="#FFFFFF" stroke-width="1" shape-rendering="crispEdges"/>
<path d="M1073.0 517.5h3M1074.5 516v3" stroke="#FF00FF" stroke-width="1"/>
<path d="M1073.0 827.5h3M1074.5 826v3" stroke="#FFFFFF" stroke-width="1" shape-rendering="crispEdges"/>
<path d="M1082.6 517.5h3M1084.1 516v3" stroke="#FF00FF" stroke-width="1"/>
<path d="M1082.6 827.5h3M1084.1 826v3" stroke="#FFFFFF" stroke-width="1" shape-rendering="crispEdges"/>
<path d="M1092.3 517.5h3M1093.8 516v3" stroke="#FF00FF" stroke-width="1"/>
<path d="M1092.3 827.5h3M1093.8 826v3" stroke="#FFFFFF" stroke-width="1" shape-rendering="crispEdges"/>
<path d="M1101.9 517.5h3M1103.4 516v3" stroke="#FF00FF" stroke-width="1"/>
<path d="M1101.9 827.5h3M1103.4 826v3" stroke="#FFFFFF" stroke-width="1" shape-rendering="crispEdges"/>
<path d="M1111.5 517.5h3M1113.0 516v3" stroke="#FF00FF" stroke-width="1"/>
<path d="M1111.5 827.5h3M1113.0 826v3" stroke="#FFFFFF" stroke-width="1" shape-rendering="crispEdges"/>
<path d="M1121.2 517.5h3M1122.7 516v3" stroke="#FF00FF" stroke-width="1"/>
<path d="M1121.2 827.5h3M1122.7 826v3" stroke="#FFFFFF" stroke-width="1" shape-rendering="crispEdges"/>
<path d="M1130.8 517.5h3M1132.3 516v3" stroke="#FF00FF" stroke-width="1"/>
<path d="M1130.8 827.5h3M1132.3 826v3" stroke="#FFFFFF" stroke-width="1" shape-rendering="crispEdges"/>
<path d="M1140.4 517.5h3M1141.9 516v3" stroke="#FF00FF" stroke-width="1"/>
<path d="M1140.4 827.5h3M1141.9 826v3" stroke="#FFFFFF" stroke-width="1" shape-rendering="crispEdges"/>
<path d="M1150.1 517.5h3M1151.6 516v3" stroke="#FF00FF" stroke-width="1"/>
<path d="M1150.1 827.5h3M1151.6 826v3" stroke="#FFFFFF" stroke-width="1" shape-rendering="crispEdges"/>
<path d="M1159.7 517.5h3M1161.2 516v3" stroke="#FF00FF" stroke-width="1"/>
<path d="M1159.7 827.5h3M1161.2 826v3" stroke="#FFFFFF" stroke-width="1" shape-rendering="crispEdges"/>
<path d="M1169.4 517.5h3M1170.9 516v3" stroke="#FF00FF" stroke-width="1"/>
<path d="M1169.4 827.5h3M1170.9 826v3" stroke="#FFFFFF" stroke-width="1" shape-rendering="crispEdges"/>
<path d="M1179.0 517.5h3M1180.5 516v3" stroke="#FF00FF" stroke-width="1"/>
<path d="M1179.0 827.5h3M1180.5 826v3" stroke="#FFFFFF" stroke-width="1" shape-rendering="crispEdges"/>
<path d="M1188.6 517.5h3M1190.1 516v3" stroke="#FF00FF" stroke-width="1"/>
<path d="M1188.6 827.5h3M1190.1 826v3" stroke="#FFFFFF" stroke-width="1" shape-rendering="crispEdges"/>
<path d="M1198.3 517.5h3M1199.8 516v3" stroke="#FF00FF" stroke-width="1"/>
<path d="M1198.3 827.5h3M1199.8 826v3" stroke="#FFFFFF" stroke-width="1" shape-rendering="crispEdges"/>
<path d="M1207.9 517.5h3M1209.4 516v3" stroke="#FF00FF" stroke-width="1"/>
<path d="M1207.9 827.5h3M1209.4 826v3" stroke="#FFFFFF" stroke-width="1" shape-rendering="crispEdges"/>
<path d="M1217.5 517.5h3M1219.0 516v3" stroke="#FF00FF" stroke-width="1"/>
<path d="M1217.5 827.5h3M1219.0 826v3" stroke="#FFFFFF" stroke-width="1" shape-rendering="crispEdges"/>
<path d="M1227.2 517.5h3M1228.7 516v3" stroke="#FF00FF" stroke-width="1"/>
<path d="M1227.2 827.5h3M1228.7 826v3" stroke="#FFFFFF" stroke-width="1" shape-rendering="crispEdges"/>
<path d="M1236.8 517.5h3M1238.3 516v3" stroke="#FF00FF" stroke-width="1"/>
<path d="M1236.8 827.5h3M1238.3 826v3" stroke="#FFFFFF" stroke-width="1" shape-rendering="crispEdges"/>
<path d="M1246.4 517.5h3M1247.9 516v3" stroke="#FF00FF" stroke-width="1"/>
<path d="M1246.4 827.5h3M1247.9 826v3" stroke="#FFFFFF" stroke-width="1" shape-rendering="crispEdges"/>
<path d="M1256.1 517.5h3M1257.6 516v3" stroke="#FF00FF" stroke-width="1"/>
<path d="M1256.1 827.5h3M1257.6 826v3" stroke="#FFFFFF" stroke-width="1" shape-rendering="crispEdges"/>
<path d="M1265.7 517.5h3M1267.2 516v3" stroke="#FF00FF" stroke-width="1"/>
<path d="M1265.7 827.5h3M1267.2 826v3" stroke="#FFFFFF" stroke-width="1" shape-rendering="crispEdges"/>
<path d="M1275.3 517.5h3M1276.8 516v3" stroke="#FF00FF" stroke-width="1"/>
<path d="M1275.3 827.5h3M1276.8 826v3" stroke="#FFFFFF" stroke-width="1" shape-rendering="crispEdges"/>
<path d="M1285.0 517.5h3M1286.5 516v3" stroke="#FF00FF" stroke-width="1"/>
<path d="M1285.0 827.5h3M1286.5 826v3" stroke="#FFFFFF" stroke-width="1" shape-rendering="crispEdges"/>
<path d="M1294.6 517.5h3M1296.1 516v3" stroke="#FF00FF" stroke-width="1"/>
<path d="M1294.6 827.5h3M1296.1 826v3" stroke="#FFFFFF" stroke-width="1" shape-rendering="crispEdges"/>
<path d="M1304.2 517.5h3M1305.7 516v3" stroke="#FF00FF" stroke-width="1"/>
<path d="M1304.2 827.5h3M1305.7 826v3" stroke="#FFFFFF" stroke-width="1" shape-rendering="crispEdges"/>
<path d="M1313.9 517.5h3M1315.4 516v3" stroke="#FF00FF" stroke-width="1"/>
<path d="M1313.9 827.5h3M1315.4 826v3" stroke="#FFFFFF" stroke-width="1" shape-rendering="crispEdges"/>
<path d="M1323.5 517.5h3M1325.0 516v3" stroke="#FF00FF" stroke-width="1"/>
<path d="M1323.5 827.5h3M1325.0 826v3" stroke="#FFFFFF" stroke-width="1" shape-rendering="crispEdges"/>
<path d="M1333.1 517.5h3M1334.6 516v3" stroke="#FF00FF" stroke-width="1"/>
<path d="M1333.1 827.5h3M1334.6 826v3" stroke="#FFFFFF" stroke-width="1" shape-rendering="crispEdges"/>
<path d="M1342.8 517.5h3M1344.3 516v3" stroke="#FF00FF" stroke-width="1"/>
<path d="M1342.8 827.5h3M1344.3 826v3" stroke="#FFFFFF" stroke-width="1" shape-rendering="crispEdges"/>
<path d="M1352.4 517.5h3M1353.9 516v3" stroke="#FF00FF" stroke-width="1"/>
<path d="M1352.4 827.5h3M1353.9 826v3" stroke="#FFFFFF" stroke-width="1" shape-rendering="crispEdges"/>
<path d="M1362.0 517.5h3M1363.5 516v3" stroke="#FF00FF" stroke-width="1"/>
<path d="M1362.0 827.5h3M1363.5 826v3" stroke="#FFFFFF" stroke-width="1" shape-rendering="crispEdges"/>
<path d="M1371.7 517.5h3M1373.2 516v3" stroke="#FF00FF" stroke-width="1"/>
<path d="M1371.7 827.5h3M1373.2 826v3" stroke="#FFFFFF" stroke-width="1" shape-rendering="crispEdges"/>
<path d="M1381.3 517.5h3M1382.8 516v3" stroke="#FF00FF" stroke-width="1"/>
<path d="M1381.3 827.5h3M1382.8 826v3" stroke="#FFFFFF" stroke-width="1" shape-rendering="crispEdges"/>
<path d="M1391.0 517.5h3M1392.5 516v3" stroke="#FF00FF" stroke-width="1"/>
<path d="M1391.0 827.5h3M1392.5 826v3" stroke="#FFFFFF" stroke-width="1" shape-rendering="crispEdges"/>
<path d="M1400.6 517.5h3M1402.1 516v3" stroke="#FF00FF" stroke-width="1"/>
<path d="M1400.6 827.5h3M1402.1 826v3" stroke="#FFFFFF" stroke-width="1" shape-rendering="crispEdges"/>
<path d="M1410.2 517.5h3M1411.7 516v3" stroke="#FF00FF" stroke-width="1"/>
<path d="M1410.2 827.5h3M1411.7 826v3" stroke="#FFFFFF" stroke-width="1" shape-rendering="crispEdges"/>
<path d="M1419.9 517.5h3M1421.4 516v3" stroke="#FF00FF" stroke-width="1"/>
<path d="M1419.9 827.5h3M1421.4 826v3" stroke="#FFFFFF" stroke-width="1" shape-rendering="crispEdges"/>
<path d="M1429.5 517.5h3M1431.0 516v3" stroke="#FF00FF" stroke-width="1"/>
<path d="M1429.5 827.5h3M1431.0 826v3" stroke="#FFFFFF" stroke-width="1" shape-rendering="crispEdges"/>
<path d="M1439.1 517.5h3M1440.6 516v3" stroke="#FF00FF" stroke-width="1"/>
<path d="M1439.1 827.5h3M1440.6 826v3" stroke="#FFFFFF" stroke-width="1" shape-rendering="crispEdges"/>
<path d="M1448.8 517.5h3M1450.3 516v3" stroke="#FF00FF" stroke-width="1"/>
<path d="M1448.8 827.5h3M1450.3 826v3" stroke="#FFFFFF" stroke-width="1" shape-rendering="crispEdges"/>
<path d="M1458.4 517.5h3M1459.9 516v3" stroke="#FF00FF" stroke-width="1"/>
<path d="M1458.4 827.5h3M1459.9 826v3" stroke="#FFFFFF" stroke-width="1" shape-rendering="crispEdges"/>
<path d="M1468.0 517.5h3M1469.5 516v3" stroke="#FF00FF" stroke-width="1"/>
<path d="M1468.0 827.5h3M1469.5 826v3" stroke="#FFFFFF" stroke-width="1" shape-rendering="crispEdges"/>
<path d="M1477.7 517.5h3M1479.2 516v3" stroke="#FF00FF" stroke-width="1"/>
<path d="M1477.7 827.5h3M1479.2 826v3" stroke="#FFFFFF" stroke-width="1" shape-rendering="crispEdges"/>
<path d="M1487.3 517.5h3M1488.8 516v3" stroke="#FF00FF" stroke-width="1"/>
<path d="M1487.3 827.5h3M1488.8 826v3" stroke="#FFFFFF" stroke-width="1" shape-rendering="crispEdges"/>
<path d="M1496.9 517.5h3M1498.4 516v3" stroke="#FF00FF" stroke-width="1"/>
<path d="M1496.9 827.5h3M1498.4 826v3" stroke="#FFFFFF" stroke-width="1" shape-rendering="crispEdges"/>
<path d="M1506.6 517.5h3M1508.1 516v3" stroke="#FF00FF" stroke-width="1"/>
<path d="M1506.6 827.5h3M1508.1 826v3" stroke="#FFFFFF" stroke-width="1" shape-rendering="crispEdges"/>
<path d="M1516.2 517.5h3M1517.7 516v3" stroke="#FF00FF" stroke-width="1"/>
<path d="M1516.2 827.5h3M1517.7 826v3" stroke="#FFFFFF" stroke-width="1" shape-rendering="crispEdges"/>
<rect x="9" y="751" width="11" height="14" fill="#FF0000"/>
<rect x="19" y="727" width="11" height="23" fill="#FF0000"/>
<rect x="28" y="701" width="11" height="28" fill="#FF0000"/>
<rect x="38" y="676" width="11" height="28" fill="#FF0000"/>
<rect x="48" y="653" width="11" height="27" fill="#FF0000"/>
<rect x="57" y="637" width="11" height="21" fill="#FF0000"/>
<rect x="67" y="628" width="11" height="13" fill="#FF0000"/>
<rect x="77" y="616" width="11" height="13" fill="#FF0000"/>
<rect x="86" y="605" width="11" height="12" fill="#FF0000"/>
<rect x="96" y="601" width="11" height="8" fill="#FF0000"/>
<rect x="106" y="605" width="11" height="1" fill="#00FF00"/>
<rect x="115" y="609" width="11" height="10" fill="#00FF00"/>
<rect x="125" y="621" width="11" height="19" fill="#00FF00"/>
<rect x="134" y="638" width="11" height="21" fill="#00FF00"/>
<rect x="144" y="656" width="11" height="24" fill="#00FF00"/>
<rect x="154" y="677" width="11" height="25" fill="#00FF00"/>
<rect x="163" y="698" width="11" height="23" fill="#00FF00"/>
<rect x="173" y="716" width="11" height="17" fill="#00FF00"/>
<rect x="183" y="731" width="11" height="16" fill="#00FF00"/>
<rect x="192" y="744" width="11" height="16" fill="#00FF00"/>
<rect x="202" y="755" width="11" height="8" fill="#00FF00"/>
<rect x="211" y="759" width="11" height="1" fill="#FF0000"/>
<rect x="221" y="746" width="11" height="10" fill="#FF0000"/>
<rect x="231" y="730" width="11" height="16" fill="#FF0000"/>
<rect x="240" y="719" width="11" height="14" fill="#FF0000"/>
<rect x="250" y="704" width="11" height="16" fill="#FF0000"/>
<rect x="260" y="693" width="11" height="14" fill="#FF0000"/>
<rect x="269" y="680" width="11" height="15" fill="#FF0000"/>
<rect x="279" y="662" width="11" height="19" fill="#FF0000"/>
<rect x="289" y="644" width="11" height="20" fill="#FF0000"/>
<rect x="298" y="625" width="11" height="21" fill="#FF0000"/>
<rect x="308" y="607" width="11" height="19" fill="#FF0000"/>
<rect x="317" y="590" width="11" height="20" fill="#FF0000"/>
<rect x="327" y="577" width="11" height="17" fill="#FF0000"/>
<rect x="337" y="568" width="11" height="13" fill="#FF0000"/>
<rect x="346" y="556" width="11" height="14" fill="#FF0000"/>
<rect x="356" y="546" width="11" height="14" fill="#FF0000"/>
<rect x="366" y="539" width="11" height="9" fill="#FF0000"/>
<rect x="375" y="538" width="11" height="5" fill="#FF0000"/>
<rect x="385" y="533" width="11" height="6" fill="#FF0000"/>
<rect x="395" y="532" width="11" height="3" fill="#FF0000"/>
<rect x="404" y="533" width="11" height="1" fill="#FF0000"/>
<rect x="414" y="530" width="11" height="2" fill="#FF0000"/>
<rect x="423" y="525" width="11" height="5" fill="#FF0000"/>
<rect x="433" y="519" width="11" height="6" fill="#FF0000"/>
<rect x="443" y="517" width="11" height="3" fill="#FF0000"/>
<rect x="452" y="519" width="11" height="1" fill="#FF0000"/>
<rect x="462" y="519" width="11" height="1" fill="#00FF00"/>
<rect x="472" y="516" width="11" height="3" fill="#FF0000"/>
<rect x="481" y="513" width="11" height="5" fill="#FF0000"/>
<rect x="491" y="510" width="11" height="3" fill="#FF0000"/>
<rect x="501" y="508" width="11" height="3" fill="#FF0000"/>
<rect x="510" y="506" width="11" height="3" fill="#FF0000"/>
<rect x="520" y="507" width="11" height="1" fill="#FF0000"/>
<rect x="529" y="507" width="11" height="1" fill="#00FF00"/>
<rect x="539" y="507" width="11" height="1" fill="#FF0000"/>
<rect x="549" y="504" width="11" height="2" fill="#FF0000"/>
<rect x="558" y="502" width="11" height="3" fill="#FF0000"/>
<rect x="568" y="500" width="11" height="2" fill="#FF0000"/>
<rect x="578" y="503" width="11" height="1" fill="#00FF00"/>
<rect x="587" y="503" width="11" height="1" fill="#00FF00"/>
<rect x="597" y="502" width="11" height="1" fill="#FF0000"/>
<rect x="607" y="504" width="11" height="6" fill="#00FF00"/>
<rect x="616" y="510" width="11" height="8" fill="#00FF00"/>
<rect x="626" y="519" width="11" height="13" fill="#00FF00"/>
<rect x="635" y="532" width="11" height="22" fill="#00FF00"/>
<rect x="645" y="550" width="11" height="18" fill="#00FF00"/>
<rect x="655" y="565" width="11" height="16" fill="#00FF00"/>
<rect x="664" y="579" width="11" height="16" fill="#00FF00"/>
<rect x="674" y="591" width="11" height="11" fill="#00FF00"/>
<rect x="684" y="599" width="11" height="9" fill="#00FF00"/>
<rect x="693" y="606" width="11" height="6" fill="#00FF00"/>
<rect x="703" y="605" width="11" height="2" fill="#FF0000"/>
<rect x="713" y="597" width="11" height="7" fill="#FF0000"/>
<rect x="722" y="592" width="11" height="6" fill="#FF0000"/>
<rect x="732" y="595" width="11" height="1" fill="#00FF00"/>
<rect x="741" y="595" width="11" height="1" fill="#00FF00"/>
<rect x="751" y="585" width="11" height="9" fill="#FF0000"/>
<rect x="761" y="581" width="11" height="6" fill="#FF0000"/>
<rect x="770" y="585" width="11" height="4" fill="#00FF00"/>
<rect x="780" y="592" width="11" height="17" fill="#00FF00"/>
<rect x="790" y="607" width="11" height="18" fill="#00FF00"/>
<rect x="799" y="622" width="11" height="17" fill="#00FF00"/>
<rect x="809" y="639" width="11" height="25" fill="#00FF00"/>
<rect x="818" y="660" width="11" height="23" fill="#00FF00"/>
<rect x="828" y="680" width="11" height="23" fill="#00FF00"/>
<rect x="838" y="697" width="11" height="13" fill="#00FF00"/>
<rect x="847" y="706" width="11" height="6" fill="#00FF00"/>
<rect x="857" y="708" width="11" height="1" fill="#FF0000"/>
<rect x="867" y="708" width="11" height="1" fill="#00FF00"/>
<rect x="876" y="710" width="11" height="7" fill="#00FF00"/>
<rect x="886" y="716" width="11" height="5" fill="#00FF00"/>
<rect x="896" y="722" width="11" height="12" fill="#00FF00"/>
<rect x="905" y="734" width="11" height="14" fill="#00FF00"/>
<rect x="915" y="745" width="11" height="8" fill="#00FF00"/>
<rect x="924" y="751" width="11" height="7" fill="#00FF00"/>
<rect x="934" y="755" width="11" height="1" fill="#00FF00"/>
<rect x="944" y="749" width="11" height="5" fill="#FF0000"/>
<rect x="953" y="751" width="11" height="1" fill="#FF0000"/>
<rect x="963" y="754" width="11" height="6" fill="#00FF00"/>
<rect x="973" y="761" width="11" height="10" fill="#00FF00"/>
<rect x="982" y="769" width="11" height="9" fill="#00FF00"/>
<rect x="992" y="776" width="11" height="1" fill="#00FF00"/>
<rect x="1002" y="770" width="11" height="4" fill="#FF0000"/>
<rect x="1011" y="756" width="11" height="12" fill="#FF0000"/>
<rect x="1021" y="744" width="11" height="13" fill="#FF0000"/>
<rect x="1030" y="738" width="11" height="9" fill="#FF0000"/>
<rect x="1040" y="739" width="11" height="2" fill="#FF0000"/>
<rect x="1050" y="738" width="11" height="1" fill="#FF0000"/>
<rect x="1059" y="740" width="11" height="5" fill="#00FF00"/>
<rect x="1069" y="744" width="11" height="6" fill="#00FF00"/>
<rect x="1079" y="750" width="11" height="9" fill="#00FF00"/>
<rect x="1088" y="759" width="11" height="11" fill="#00FF00"/>
<rect x="1098" y="767" width="11" height="1" fill="#00FF00"/>
<rect x="1108" y="768" width="11" height="1" fill="#00FF00"/>
<rect x="1117" y="770" width="11" height="6" fill="#00FF00"/>
<rect x="1127" y="772" width="11" height="1" fill="#FF0000"/>
<rect x="1136" y="763" width="11" height="7" fill="#FF0000"/>
<rect x="1146" y="745" width="11" height="15" fill="#FF0000"/>
<rect x="1156" y="717" width="11" height="27" fill="#FF0000"/>
<rect x="1165" y="695" width="11" height="26" fill="#FF0000"/>
<rect x="1175" y="684" width="11" height="16" fill="#FF0000"/>
<rect x="1185" y="679" width="11" height="9" fill="#FF0000"/>
<rect x="1194" y="673" width="11" height="8" fill="#FF0000"/>
<rect x="1204" y="667" width="11" height="7" fill="#FF0000"/>
<rect x="1214" y="661" width="11" height="7" fill="#FF0000"/>
<rect x="1223" y="663" width="11" height="1" fill="#FF0000"/>
<rect x="1233" y="658" width="11" height="4" fill="#FF0000"/>
<rect x="1242" y="660" width="11" height="1" fill="#00FF00"/>
<rect x="1252" y="659" width="11" height="1" fill="#FF0000"/>
<rect x="1262" y="661" width="11" height="4" fill="#00FF00"/>
<rect x="1271" y="666" width="11" height="10" fill="#00FF00"/>
<rect x="1281" y="674" width="11" height="6" fill="#00FF00"/>
<rect x="1291" y="677" width="11" height="1" fill="#00FF00"/>
<rect x="1300" y="668" width="11" height="8" fill="#FF0000"/>
<rect x="1310" y="645" width="11" height="20" fill="#FF0000"/>
<rect x="1320" y="625" width="11" height="23" fill="#FF0000"/>
<rect x="1329" y="607" width="11" height="21" fill="#FF0000"/>
<rect x="1339" y="594" width="11" height="18" fill="#FF0000"/>
<rect x="1348" y="590" width="11" height="10" fill="#FF0000"/>
<rect x="1358" y="586" width="11" height="6" fill="#FF0000"/>
<rect x="1368" y="580" width="11" height="7" fill="#FF0000"/>
<rect x="1377" y="574" width="11" height="6" fill="#FF0000"/>
<rect x="1387" y="571" width="11" height="4" fill="#FF0000"/>
<rect x="1397" y="574" width="11" height="3" fill="#00FF00"/>
<rect x="1406" y="578" width="11" height="9" fill="#00FF00"/>
<rect x="1416" y="587" width="11" height="12" fill="#00FF00"/>
<rect x="1425" y="597" width="11" height="9" fill="#00FF00"/>
<rect x="1435" y="603" width="11" height="1" fill="#00FF00"/>
<rect x="1445" y="592" width="11" height="9" fill="#FF0000"/>
<rect x="1454" y="582" width="11" height="11" fill="#FF0000"/>
<rect x="1464" y="575" width="11" height="9" fill="#FF0000"/>
<rect x="1474" y="570" width="11" height="7" fill="#FF0000"/>
<rect x="1483" y="565" width="11" height="6" fill="#FF0000"/>
<rect x="1493" y="566" width="11" height="1" fill="#FF0000"/>
<rect x="1503" y="568" width="11" height="4" fill="#00FF00"/>
<rect x="1512" y="571" width="11" height="1" fill="#00FF00"/>
<polyline points="14.7,594.8 24.3,562.3 33.9,530.4 43.6,519.2 53.2,520.3 62.8,541.3 72.5,589.0 82.1,628.0 91.7,629.3 101.4,638.5 111.0,680.0 120.6,728.4 130.3,764.6 139.9,785.0 149.5,793.0 159.2,806.7 168.8,816.4 178.4,806.6 188.1,779.7 197.7,780.3 207.3,766.7 217.0,700.0 226.6,620.0 236.3,574.9 245.9,549.3 255.5,538.1 265.2,536.7 274.8,548.6 284.4,540.2 294.1,532.9 303.7,521.0 313.3,517.1 323.0,512.2 332.6,511.5 342.2,525.0 351.9,538.0 361.5,532.6 371.1,535.0 380.8,571.0 390.4,594.0 400.0,610.3 409.7,647.0 419.3,683.8 429.0,652.3 438.6,623.0 448.2,594.7 457.9,606.7 467.5,644.0 477.1,674.2 486.8,644.0 496.4,612.7 506.0,599.5 515.7,599.5 525.3,609.0 534.9,655.6 544.6,656.0 554.2,623.5 563.8,586.5 573.5,555.5 583.1,555.5 592.8,577.3 602.4,571.6 612.0,561.3 621.7,574.0 631.3,600.3 640.9,639.3 650.6,681.7 660.2,696.6 669.8,701.2 679.5,682.8 689.1,645.0 698.7,631.7 708.4,609.0 718.0,582.4 727.6,567.0 737.3,584.7 746.9,615.7 756.5,611.0 766.2,595.0 775.8,624.9 785.4,677.6 795.1,725.8 804.7,755.6 814.4,774.8 824.0,785.7 833.6,779.7 843.3,771.2 852.9,709.8 862.5,659.3 872.2,622.4 881.8,635.6 891.4,676.0 901.1,712.0 910.7,746.0 920.3,758.0 930.0,726.7 939.6,695.4 949.2,647.2 958.9,630.0 968.5,660.0 978.1,708.0 987.8,750.0 997.4,754.0 1007.1,713.0 1016.7,644.0 1026.3,600.0 1036.0,581.0 1045.6,609.0 1055.2,665.5 1064.9,729.0 1074.5,750.8 1084.1,772.4 1093.8,794.1 1103.4,784.5 1113.0,746.0 1122.7,731.5 1132.3,717.0 1141.9,655.0 1151.6,608.0 1161.2,568.6 1170.9,547.5 1180.5,558.5 1190.1,597.0 1199.8,639.3 1209.4,702.6 1219.0,720.7 1228.7,725.5 1238.3,726.7 1247.9,712.2 1257.6,717.0 1267.2,718.3 1276.8,736.8 1286.5,736.8 1296.1,695.0 1305.7,642.0 1315.4,596.0 1325.0,562.0 1334.6,535.6 1344.3,523.2 1353.9,546.4 1363.5,589.8 1373.2,633.0 1382.8,648.0 1392.5,658.0 1402.1,681.0 1411.7,721.9 1421.4,750.8 1431.0,765.2 1440.6,743.5 1450.3,661.7 1459.9,611.5 1469.5,582.6 1479.2,568.7 1488.8,568.7 1498.4,586.2 1508.1,635.6 1517.7,660.5" fill="none" stroke="#FFFFFF" stroke-width="1" shape-rendering="crispEdges"/>
<polyline points="14.7,543.4 24.3,519.2 33.9,514.6 43.6,514.6 53.2,532.9 62.8,600.0 72.5,658.2 82.1,631.0 91.7,628.8 101.4,673.0 111.0,726.0 120.6,775.4 130.3,799.5 139.9,790.8 149.5,806.6 159.2,824.4 168.8,820.2 178.4,762.5 188.1,773.0 197.7,795.0 207.3,677.0 217.0,610.0 226.6,556.0 236.3,536.7 245.9,539.6 255.5,521.8 265.2,562.3 274.8,539.8 284.4,523.4 294.1,520.3 303.7,514.4 313.3,514.4 323.0,502.3 332.6,526.0 342.2,548.9 351.9,531.0 361.5,524.8 371.1,562.0 380.8,611.0 390.4,597.5 400.0,657.0 409.7,715.1 419.3,663.0 429.0,614.0 438.6,570.6 448.2,592.3 457.9,647.0 467.5,700.7 477.1,653.5 486.8,597.0 496.4,583.8 506.0,609.0 515.7,581.4 525.3,680.2 534.9,673.0 544.6,628.0 554.2,583.0 563.8,541.8 573.5,535.6 583.1,596.8 592.8,575.0 602.4,548.7 612.0,565.9 621.7,605.0 631.3,639.3 640.9,702.3 650.6,702.3 660.2,703.5 669.8,703.5 679.5,621.0 689.1,634.4 698.7,618.0 708.4,576.7 718.0,550.3 727.6,568.7 737.3,636.3 746.9,626.0 756.5,575.5 766.2,608.8 775.8,682.0 785.4,740.0 795.1,758.0 804.7,779.7 814.4,802.5 824.0,771.2 833.6,789.3 843.3,707.4 852.9,641.0 862.5,591.8 872.2,623.5 881.8,671.3 891.4,709.8 901.1,750.8 910.7,786.9 920.3,726.7 930.0,709.8 939.6,634.4 949.2,606.7 958.9,647.0 968.5,708.0 978.1,763.0 987.8,771.0 997.4,718.0 1007.1,660.0 1016.7,585.0 1026.3,560.0 1036.0,599.5 1045.6,671.0 1055.2,731.5 1064.9,771.0 1074.5,778.5 1084.1,803.7 1093.8,807.3 1103.4,732.7 1113.0,716.6 1122.7,744.7 1132.3,646.6 1141.9,597.0 1151.6,556.7 1161.2,528.3 1170.9,545.7 1180.5,599.0 1190.1,655.8 1199.8,717.0 1209.4,741.0 1219.0,721.9 1228.7,744.7 1238.3,693.0 1247.9,728.0 1257.6,703.8 1267.2,744.6 1276.8,755.4 1286.5,698.0 1296.1,652.0 1305.7,593.0 1315.4,552.6 1325.0,524.8 1334.6,510.8 1344.3,523.2 1353.9,588.0 1363.5,651.7 1373.2,653.0 1382.8,659.7 1392.5,669.0 1402.1,738.7 1411.7,753.2 1421.4,780.9 1431.0,764.0 1440.6,676.0 1450.3,604.0 1459.9,567.0 1469.5,558.0 1479.2,569.4 1488.8,568.2 1498.4,628.0 1508.1,685.7 1517.7,653.2" fill="none" stroke="#FFFF00" stroke-width="1" shape-rendering="crispEdges"/>
<rect x="301.5" y="471.5" width="4" height="19" fill="none" stroke="#FF0000" stroke-width="1"/>
<rect x="301.5" y="490.5" width="4" height="19" fill="none" stroke="#FFC000" stroke-width="1"/>
<rect x="311.5" y="471.5" width="4" height="19" fill="none" stroke="#FF0000" stroke-width="1"/>
<rect x="311.5" y="490.5" width="4" height="19" fill="none" stroke="#FFC000" stroke-width="1"/>
<rect x="320.5" y="471.5" width="4" height="19" fill="none" stroke="#FF0000" stroke-width="1"/>
<rect x="320.5" y="490.5" width="4" height="19" fill="none" stroke="#FFC000" stroke-width="1"/>
<rect x="330.5" y="471.5" width="4" height="38" fill="none" stroke="#00FF00" stroke-width="1"/>
<rect x="331" y="490" width="3" height="1" fill="#FFC000"/>
<rect x="349.5" y="471.5" width="4" height="19" fill="none" stroke="#FF0000" stroke-width="1"/>
<rect x="349.5" y="490.5" width="4" height="19" fill="none" stroke="#FFC000" stroke-width="1"/>
<rect x="359.5" y="471.5" width="4" height="19" fill="none" stroke="#FF0000" stroke-width="1"/>
<rect x="359.5" y="490.5" width="4" height="19" fill="none" stroke="#FFC000" stroke-width="1"/>
<rect x="369.5" y="471.5" width="4" height="38" fill="none" stroke="#00FF00" stroke-width="1"/>
<rect x="118.5" y="819.5" width="4" height="19" fill="none" stroke="#FFFF00" stroke-width="1"/>
<rect x="118.5" y="839.5" width="4" height="18" fill="none" stroke="#00FF00" stroke-width="1"/>
<rect x="128.5" y="819.5" width="4" height="19" fill="none" stroke="#FFFF00" stroke-width="1"/>
<rect x="128.5" y="839.5" width="4" height="18" fill="none" stroke="#00FF00" stroke-width="1"/>
<rect x="137.5" y="819.5" width="4" height="38" fill="none" stroke="#FF0000" stroke-width="1"/>
<rect x="812.5" y="819.5" width="4" height="19" fill="none" stroke="#FFFF00" stroke-width="1"/>
<rect x="812.5" y="839.5" width="4" height="18" fill="none" stroke="#00FF00" stroke-width="1"/>
<rect x="821.5" y="819.5" width="4" height="38" fill="none" stroke="#FF0000" stroke-width="1"/>
<rect x="831.5" y="819.5" width="4" height="19" fill="none" stroke="#FFFF00" stroke-width="1"/>
<rect x="831.5" y="839.5" width="4" height="18" fill="none" stroke="#00FF00" stroke-width="1"/>
<rect x="841.5" y="819.5" width="4" height="38" fill="none" stroke="#FF0000" stroke-width="1"/>
<rect x="899.5" y="819.5" width="4" height="19" fill="none" stroke="#FFFF00" stroke-width="1"/>
<rect x="899.5" y="839.5" width="4" height="18" fill="none" stroke="#00FF00" stroke-width="1"/>
<rect x="908.5" y="819.5" width="4" height="19" fill="none" stroke="#FFFF00" stroke-width="1"/>
<rect x="908.5" y="839.5" width="4" height="18" fill="none" stroke="#00FF00" stroke-width="1"/>
<rect x="918.5" y="819.5" width="4" height="38" fill="none" stroke="#FF0000" stroke-width="1"/>
<rect x="976.5" y="819.5" width="4" height="19" fill="none" stroke="#FFFF00" stroke-width="1"/>
<rect x="976.5" y="839.5" width="4" height="18" fill="none" stroke="#00FF00" stroke-width="1"/>
<rect x="985.5" y="819.5" width="4" height="38" fill="none" stroke="#FF0000" stroke-width="1"/>
<rect x="1062.5" y="839.5" width="4" height="18" fill="none" stroke="#00FF00" stroke-width="1"/>
<rect x="1072.5" y="819.5" width="4" height="38" fill="none" stroke="#FF0000" stroke-width="1"/>
<rect x="1082.5" y="819.5" width="4" height="19" fill="none" stroke="#FFFF00" stroke-width="1"/>
<rect x="1082.5" y="839.5" width="4" height="18" fill="none" stroke="#00FF00" stroke-width="1"/>
<rect x="1091.5" y="819.5" width="4" height="19" fill="none" stroke="#FFFF00" stroke-width="1"/>
<rect x="1091.5" y="839.5" width="4" height="18" fill="none" stroke="#00FF00" stroke-width="1"/>
<rect x="1101.5" y="819.5" width="4" height="38" fill="none" stroke="#FF0000" stroke-width="1"/>
</svg>
<span class="h" style="left:3.7px;top:6px;color:#C0C0C0;letter-spacing:0px">趋势多空波段</span>
<span class="h" style="left:79px;top:6px;color:#C0C0C0;letter-spacing:0px">股道边网</span>
<span class="h" style="left:127px;top:6px;color:#C0C0C0;letter-spacing:0.45px">www.de6688.com</span>
<span class="h" style="left:244px;top:6px;color:#C0C0C0;letter-spacing:0px">:1088.47</span>
<span class="h" style="left:297.7px;top:6px;color:#00A800;letter-spacing:0px">H11:1114</span>
<span class="h" style="left:356.8px;top:6px;color:#40A8B8;letter-spacing:0px">L11:1042</span>
<span class="h" style="left:412.6px;top:6px;color:#7878E0;letter-spacing:0px">HHH1:1114</span>
<span class="h" style="left:483.1px;top:6px;color:#FF0000;letter-spacing:0px">LLL1:1042</span>
<span class="h" style="left:543.7px;top:6px;color:#FFA050;letter-spacing:0px">H22:1121</span>
<span class="h" style="left:602.3px;top:6px;color:#30C830;letter-spacing:0px">L22:995</span>
<span class="h" style="left:3.1px;top:435px;color:#C0C0C0;letter-spacing:0px">精准顶底趋势王</span>
<span class="h" style="left:91.3px;top:435px;color:#C0C0C0;letter-spacing:0px">股道边网</span>
<span class="h" style="left:138.2px;top:435px;color:#C0C0C0;letter-spacing:0.45px">www.de6688.com</span>
<span class="h" style="left:256.2px;top:435px;color:#FF0000;letter-spacing:0px">精准趋势:8</span>
<span class="h" style="left:319.4px;top:435px;color:#00FF00;letter-spacing:0px">红绿线为中期:8</span>
<span class="h" style="left:406.4px;top:435px;color:#FFFFFF;letter-spacing:0px">黃白线为短期:8</span>
<span class="h" style="left:492.6px;top:435px;color:#FF00FF;letter-spacing:0px">上下柱体为顶底背离:88</span>
<span class="h" style="left:624.3px;top:435px;color:#FFFF00;letter-spacing:0px">W:53.59</span>
<span class="h" style="left:674.3px;top:435px;color:#FFFFFF;letter-spacing:0px">X:50.84</span>
<div class="bx" style="left:233px;top:9px"></div>
<div class="bx" style="left:245px;top:438px"></div>
<div class="lb" style="left:105px;top:229px;color:#00FF00">卖</div>
<div class="lb" style="left:452px;top:130px;color:#00FF00">卖</div>
<div class="lb" style="left:779px;top:78px;color:#00FF00">卖</div>
<div class="lb" style="left:895px;top:120px;color:#00FF00">卖</div>
<div class="lb" style="left:963px;top:134px;color:#00FF00">卖</div>
<div class="lb" style="left:1059px;top:136px;color:#00FF00">卖</div>
<div class="lb" style="left:1223px;top:132px;color:#00FF00">卖</div>
<div class="lb" style="left:1396px;top:84px;color:#00FF00">卖</div>
<div class="lb" style="left:1502px;top:83px;color:#00FF00">卖</div>
<div class="lb" style="left:211px;top:390px;color:#FFFF00">买</div>
<div class="lb" style="left:481px;top:171px;color:#FFFF00">买</div>
<div class="lb" style="left:857px;top:163px;color:#FFFF00">买</div>
<div class="lb" style="left:943px;top:171px;color:#FFFF00">买</div>
<div class="lb" style="left:1001px;top:197px;color:#FFFF00">买</div>
<div class="lb" style="left:1126px;top:213px;color:#FFFF00">买</div>
<div class="lb" style="left:1300px;top:183px;color:#FFFF00">买</div>
<div class="lb" style="left:1444px;top:138px;color:#FFFF00">买</div>
<div id="logo"><div class="a">股道边</div><div class="b">指标公式量化资源</div><div class="c">www.de6688.com</div></div>
</body></html>
